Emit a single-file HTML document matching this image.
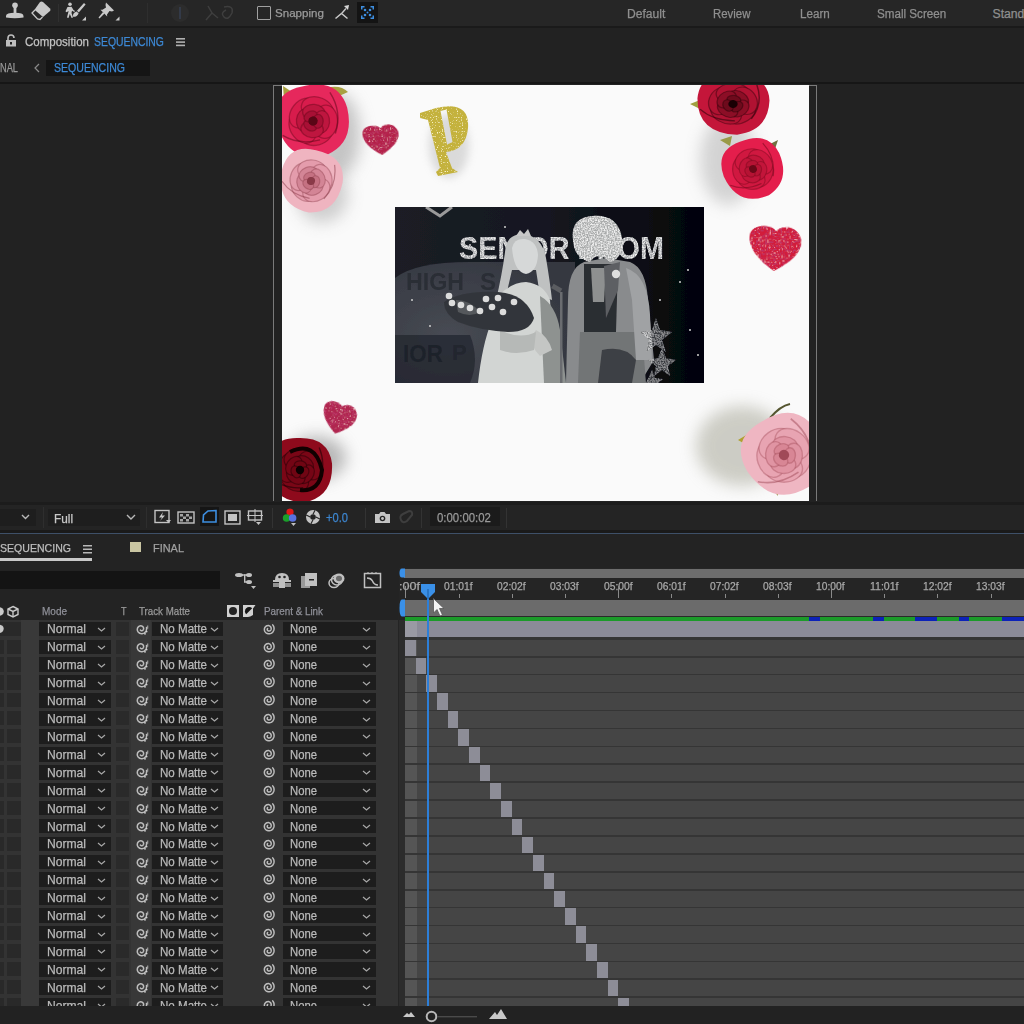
<!DOCTYPE html>
<html><head><meta charset="utf-8">
<style>
*{margin:0;padding:0;box-sizing:border-box}
html,body{width:1024px;height:1024px;overflow:hidden;background:#202020;font-family:"Liberation Sans",sans-serif;color:#a8a8a8;position:relative}
.a{position:absolute;display:block}
.t{position:absolute;white-space:nowrap;transform-origin:0 0;-webkit-text-stroke:0.25px currentColor}
</style></head><body>
<div class="a" style="left:0px;top:0px;width:1024px;height:26px;background:#262626;"></div>
<div class="a" style="left:0px;top:26px;width:1024px;height:2px;background:#1a1a1a;"></div>
<svg class="a" style="left:0px;top:0px;" width="130" height="26" viewBox="0 0 130 26"><g fill="#c9c9c9"><circle cx="15" cy="5.2" r="2.8"/><rect x="13.6" y="7" width="2.8" height="6"/><path d="M6 16 Q6 12.8 15 12.8 Q23.5 12.8 23.5 16 L23.5 17.6 Q15 19 6 17.6Z"/><path d="M40 2 Q41.5 0.8 43 2 L50 8.5 Q51 10 50 11 L43 17 L34.5 9.8Z"/><circle cx="70" cy="4.3" r="1.8"/><path d="M67.5 7 L71.5 6.8 L73.5 10 L75 11 L74.3 12 L72 10.8 L71.5 13 L73 17.5 L71.6 18 L69.8 14 L68.5 18 L67 17.6 L68.6 11 L66.5 12.2 L65.5 11.2Z"/><path d="M84 3 L85.6 4.6 L78.8 12.4 L77 10.8Z"/><path d="M76.5 11.5 Q73 12.5 72.8 16.8 Q77.5 17 78.6 13.2Z"/><path d="M82 20.5 L86 20.5 L86 16.5Z"/><path d="M106 2.5 L114 10.5 L112 11.5 L109.5 11 L107 14.5 L107.2 16.5 L100.5 9.8 L102.5 9.8 L106 7.5 L105.5 5Z"/><path d="M103 12 L104.5 13.5 L99.5 18.5 L98.5 17.5Z"/><path d="M115.5 20.5 L119.5 20.5 L119.5 16.5Z"/></g><path d="M35 10 L32 13 L37.5 19 L40 19.5 L42.5 17" fill="none" stroke="#c9c9c9" stroke-width="1.3"/><rect x="58" y="4" width="1" height="18" fill="#303030"/></svg>
<div class="a" style="left:147px;top:3px;width:1px;height:20px;background:#2e2e2e;"></div>
<svg class="a" style="left:168px;top:1px;" width="70" height="24" viewBox="0 0 70 24"><circle cx="12" cy="12" r="9" fill="#2c2c2c"/><path d="M11 6 L13 6 L13 18 L11 18Z" fill="#333a48"/><path d="M40 5 L44 12 L38 19 M44 12 L50 17" stroke="#3e3e3e" stroke-width="1.5" fill="none"/><path d="M56 6 Q66 4 64 12 Q60 20 56 16 Q52 12 58 9" stroke="#3e3e3e" stroke-width="1.5" fill="none"/></svg>
<div class="a" style="left:257px;top:6px;width:14px;height:14px;background:transparent;border:1.5px solid #a0a0a0;border-radius:1px"></div>
<div class="t" style="left:275px;top:8.16px;font-size:11.39px;line-height:11.39px;color:#9b9b9b;transform:scaleX(1.018);">Snapping</div>
<svg class="a" style="left:333px;top:3px;" width="18" height="18" viewBox="0 0 18 18"><path d="M2.5 15.5 L8.5 10.5 L14.5 15.5" stroke="#c9c9c9" stroke-width="1.5" fill="none"/><path d="M9 10 L13 5.5" stroke="#c9c9c9" stroke-width="1.4"/><path d="M11 3 L16 2 L15 7Z" fill="#d8d8d8"/></svg>
<div class="a" style="left:357px;top:2px;width:21px;height:21px;background:#141414;"></div>
<svg class="a" style="left:357px;top:2px;" width="21" height="21" viewBox="0 0 21 21"><g fill="#3d8ee0"><path d="M4 4h3.5v1.5H5.5V7.5H4z"/><path d="M17 4h-3.5v1.5h2V7.5H17z"/><path d="M4 17h3.5v-1.5H5.5V13.5H4z"/><path d="M17 17h-3.5v-1.5h2V13.5H17z"/><circle cx="8" cy="8" r="1.3"/><circle cx="13" cy="8" r="1.3"/><circle cx="8" cy="13" r="1.3"/><circle cx="13" cy="13" r="1.3"/><circle cx="10.5" cy="10.5" r="1"/></g></svg>
<div class="t" style="left:627px;top:7.57px;font-size:12.21px;line-height:12.21px;color:#8f8f8f;transform:scaleX(0.993);">Default</div>
<div class="t" style="left:712.6px;top:7.57px;font-size:12.21px;line-height:12.21px;color:#8f8f8f;transform:scaleX(0.934);">Review</div>
<div class="t" style="left:800px;top:7.57px;font-size:12.21px;line-height:12.21px;color:#8f8f8f;transform:scaleX(0.954);">Learn</div>
<div class="t" style="left:876.6px;top:7.57px;font-size:12.21px;line-height:12.21px;color:#8f8f8f;transform:scaleX(0.953);">Small Screen</div>
<div class="t" style="left:992.5px;top:7.57px;font-size:12.21px;line-height:12.21px;color:#8f8f8f;transform:scaleX(1.000);">Standard</div>
<div class="a" style="left:0px;top:28px;width:1024px;height:54px;background:#222222;"></div>
<svg class="a" style="left:5px;top:34px;" width="12" height="13" viewBox="0 0 12 13"><path d="M3 6 V4 Q3 1 6 1 Q9 1 9 4" stroke="#bdbdbd" stroke-width="1.6" fill="none"/><rect x="1" y="6" width="10" height="6.5" fill="#bdbdbd"/><rect x="5" y="8" width="2" height="2.5" fill="#222"/></svg>
<div class="t" style="left:25px;top:36.02px;font-size:12.62px;line-height:12.62px;color:#c3c3c3;transform:scaleX(0.912);">Composition</div>
<div class="t" style="left:94px;top:36.02px;font-size:12.62px;line-height:12.62px;color:#3d89d6;transform:scaleX(0.825);">SEQUENCING</div>
<svg class="a" style="left:176px;top:37px;" width="9" height="10" viewBox="0 0 9 10"><g fill="#b0b0b0"><rect y="1" width="9" height="1.6"/><rect y="4.3" width="9" height="1.6"/><rect y="7.6" width="9" height="1.6"/></g></svg>
<div class="t" style="left:0px;top:61.82px;font-size:12.62px;line-height:12.62px;color:#9a9a9a;transform:scaleX(0.733);">NAL</div>
<svg class="a" style="left:33px;top:63px;" width="8" height="10" viewBox="0 0 8 10"><path d="M6 1 L2 5 L6 9" stroke="#8a8a8a" stroke-width="1.2" fill="none"/></svg>
<div class="a" style="left:46px;top:60px;width:104px;height:16px;background:#151515;"></div>
<div class="t" style="left:54px;top:61.82px;font-size:12.62px;line-height:12.62px;color:#3d89d6;transform:scaleX(0.837);">SEQUENCING</div>
<div class="a" style="left:0px;top:82px;width:1024px;height:2px;background:#161616;"></div>
<div class="a" style="left:0px;top:84px;width:1024px;height:418px;background:#222222;"></div>
<div class="a" style="left:273px;top:85px;width:1px;height:416px;background:#7a7a7a;"></div>
<div class="a" style="left:273px;top:85px;width:9px;height:1px;background:#7a7a7a;"></div>
<div class="a" style="left:816px;top:85px;width:1px;height:416px;background:#7a7a7a;"></div>
<div class="a" style="left:809px;top:85px;width:8px;height:1px;background:#7a7a7a;"></div>
<svg class="a" style="left:282px;top:85px" width="527" height="416" viewBox="282 85 527 416"><defs><filter id="bl8" x="-50%" y="-50%" width="200%" height="200%"><feGaussianBlur stdDeviation="8"/></filter><filter id="bl4" x="-50%" y="-50%" width="200%" height="200%"><feGaussianBlur stdDeviation="4"/></filter><filter id="bl1"><feGaussianBlur stdDeviation="0.8"/></filter><filter id="gl"><feTurbulence type="fractalNoise" baseFrequency="0.55" numOctaves="1" seed="3" result="n"/><feColorMatrix in="n" type="matrix" values="0 0 0 0 0.95  0 0 0 0 0.45  0 0 0 0 0.55  0 0 0 6 -3.7" result="s"/><feColorMatrix in="n" type="matrix" values="0 0 0 0 0.5  0 0 0 0 0.04  0 0 0 0 0.14  0 0 0 -9 4.1" result="d"/><feComposite in="s" in2="SourceAlpha" operator="in" result="sp"/><feComposite in="d" in2="SourceAlpha" operator="in" result="dp"/><feMerge><feMergeNode in="SourceGraphic"/><feMergeNode in="dp"/><feMergeNode in="sp"/></feMerge></filter><filter id="glg"><feTurbulence type="fractalNoise" baseFrequency="0.8" numOctaves="1" seed="5" result="n"/><feColorMatrix in="n" type="matrix" values="0 0 0 0 0.98  0 0 0 0 0.92  0 0 0 0 0.55  0 0 0 6 -3.6" result="s"/><feComposite in="s" in2="SourceAlpha" operator="in" result="sp"/><feMerge><feMergeNode in="SourceGraphic"/><feMergeNode in="sp"/></feMerge></filter></defs><rect x="282" y="85" width="527" height="416" fill="#fafafa"/><ellipse cx="338" cy="135" rx="22" ry="42" fill="#9a9a9a" opacity="0.55" filter="url(#bl8)"/><ellipse cx="322" cy="195" rx="26" ry="28" fill="#9a9a9a" opacity="0.45" filter="url(#bl8)"/><ellipse cx="728" cy="160" rx="28" ry="45" fill="#9a9a9a" opacity="0.4" filter="url(#bl8)"/><ellipse cx="316" cy="458" rx="30" ry="22" fill="#8a8a8a" opacity="0.6" filter="url(#bl8)"/><ellipse cx="742" cy="446" rx="46" ry="40" fill="#a8a89a" opacity="0.55" filter="url(#bl8)"/><ellipse cx="449" cy="146" rx="20" ry="32" fill="#a0a0a0" opacity="0.35" filter="url(#bl4)"/><path d="M326 88 Q340 84 348 92 Q338 98 328 94Z" fill="#a8a040"/><path d="M283 86 L292 92 L284 100Z" fill="#a8a040"/><g transform="translate(313 121) scale(1 1.0) rotate(-10)"><path d="M-36 -3.6 Q-36 -36 -3.6 -36 Q32.4 -37.800000000000004 36 -7.2 Q37.800000000000004 28.8 7.2 36 Q-32.4 37.800000000000004 -36 -3.6Z" fill="#e6285c"/><ellipse cx="0.9" cy="12.2" rx="16.7" ry="12.3" transform="rotate(176 0.9 12.2)" fill="#d81c4c" stroke="#5a0616" stroke-width="1.30" stroke-opacity="0.38"/><ellipse cx="-11.4" cy="4.7" rx="16.7" ry="12.3" transform="rotate(248 -11.4 4.7)" fill="#d81c4c" stroke="#5a0616" stroke-width="1.30" stroke-opacity="0.38"/><ellipse cx="-7.9" cy="-9.4" rx="16.7" ry="12.3" transform="rotate(320 -7.9 -9.4)" fill="#d81c4c" stroke="#5a0616" stroke-width="1.30" stroke-opacity="0.38"/><ellipse cx="6.4" cy="-10.4" rx="16.7" ry="12.3" transform="rotate(392 6.4 -10.4)" fill="#d81c4c" stroke="#5a0616" stroke-width="1.30" stroke-opacity="0.38"/><ellipse cx="11.9" cy="2.9" rx="16.7" ry="12.3" transform="rotate(464 11.9 2.9)" fill="#d81c4c" stroke="#5a0616" stroke-width="1.30" stroke-opacity="0.38"/><ellipse cx="-8.0" cy="-2.3" rx="11.3" ry="8.3" transform="rotate(286 -8.0 -2.3)" fill="#be163f" stroke="#5a0616" stroke-width="1.30" stroke-opacity="0.38"/><ellipse cx="2.3" cy="-8.0" rx="11.3" ry="8.3" transform="rotate(376 2.3 -8.0)" fill="#be163f" stroke="#5a0616" stroke-width="1.30" stroke-opacity="0.38"/><ellipse cx="8.0" cy="2.3" rx="11.3" ry="8.3" transform="rotate(466 8.0 2.3)" fill="#be163f" stroke="#5a0616" stroke-width="1.30" stroke-opacity="0.38"/><ellipse cx="-2.3" cy="8.0" rx="11.3" ry="8.3" transform="rotate(556 -2.3 8.0)" fill="#be163f" stroke="#5a0616" stroke-width="1.30" stroke-opacity="0.38"/><ellipse cx="-3.5" cy="3.8" rx="7.0" ry="5.1" transform="rotate(223 -3.5 3.8)" fill="#a81035" stroke="#5a0616" stroke-width="1.30" stroke-opacity="0.38"/><ellipse cx="-1.5" cy="-4.9" rx="7.0" ry="5.1" transform="rotate(343 -1.5 -4.9)" fill="#a81035" stroke="#5a0616" stroke-width="1.30" stroke-opacity="0.38"/><ellipse cx="5.0" cy="1.2" rx="7.0" ry="5.1" transform="rotate(463 5.0 1.2)" fill="#a81035" stroke="#5a0616" stroke-width="1.30" stroke-opacity="0.38"/><circle cx="0" cy="0" r="4.68" fill="#5a0616"/><path d="M-32.4 9.0 Q-18.0 21.599999999999998 3.6 19.8 M21.599999999999998 -25.2 Q30.599999999999998 -3.6 19.8 16.2" stroke="#5a0616" stroke-width="1.44" fill="none" opacity="0.5"/></g><g transform="translate(311 181) scale(1 1.0) rotate(15)"><path d="M-31 -3.1 Q-31 -31 -3.1 -31 Q27.900000000000002 -32.550000000000004 31 -6.2 Q32.550000000000004 24.8 6.2 31 Q-27.900000000000002 32.550000000000004 -31 -3.1Z" fill="#efb4c0"/><ellipse cx="-4.7" cy="9.5" rx="14.4" ry="10.6" transform="rotate(207 -4.7 9.5)" fill="#e49cac" stroke="#8a3a48" stroke-width="1.18" stroke-opacity="0.38"/><ellipse cx="-10.5" cy="-1.6" rx="14.4" ry="10.6" transform="rotate(279 -10.5 -1.6)" fill="#e49cac" stroke="#8a3a48" stroke-width="1.18" stroke-opacity="0.38"/><ellipse cx="-1.7" cy="-10.4" rx="14.4" ry="10.6" transform="rotate(351 -1.7 -10.4)" fill="#e49cac" stroke="#8a3a48" stroke-width="1.18" stroke-opacity="0.38"/><ellipse cx="9.4" cy="-4.9" rx="14.4" ry="10.6" transform="rotate(423 9.4 -4.9)" fill="#e49cac" stroke="#8a3a48" stroke-width="1.18" stroke-opacity="0.38"/><ellipse cx="7.5" cy="7.4" rx="14.4" ry="10.6" transform="rotate(495 7.5 7.4)" fill="#e49cac" stroke="#8a3a48" stroke-width="1.18" stroke-opacity="0.38"/><ellipse cx="4.2" cy="5.8" rx="9.8" ry="7.2" transform="rotate(144 4.2 5.8)" fill="#d38596" stroke="#8a3a48" stroke-width="1.18" stroke-opacity="0.38"/><ellipse cx="-5.8" cy="4.2" rx="9.8" ry="7.2" transform="rotate(234 -5.8 4.2)" fill="#d38596" stroke="#8a3a48" stroke-width="1.18" stroke-opacity="0.38"/><ellipse cx="-4.2" cy="-5.8" rx="9.8" ry="7.2" transform="rotate(324 -4.2 -5.8)" fill="#d38596" stroke="#8a3a48" stroke-width="1.18" stroke-opacity="0.38"/><ellipse cx="5.8" cy="-4.2" rx="9.8" ry="7.2" transform="rotate(414 5.8 -4.2)" fill="#d38596" stroke="#8a3a48" stroke-width="1.18" stroke-opacity="0.38"/><ellipse cx="-2.6" cy="-3.6" rx="6.0" ry="4.4" transform="rotate(324 -2.6 -3.6)" fill="#c57182" stroke="#8a3a48" stroke-width="1.18" stroke-opacity="0.38"/><ellipse cx="4.4" cy="-0.4" rx="6.0" ry="4.4" transform="rotate(444 4.4 -0.4)" fill="#c57182" stroke="#8a3a48" stroke-width="1.18" stroke-opacity="0.38"/><ellipse cx="-1.8" cy="4.0" rx="6.0" ry="4.4" transform="rotate(564 -1.8 4.0)" fill="#c57182" stroke="#8a3a48" stroke-width="1.18" stroke-opacity="0.38"/><circle cx="0" cy="0" r="4.03" fill="#8a3a48"/><path d="M-27.900000000000002 7.75 Q-15.5 18.599999999999998 3.1 17.05 M18.599999999999998 -21.7 Q26.349999999999998 -3.1 17.05 13.950000000000001" stroke="#8a3a48" stroke-width="1.24" fill="none" opacity="0.5"/></g><path transform="rotate(-5 381.0 139.5)" d="M381.0 155 C368.4 147.25 363 139.5 363 132.68 C363 125.55 372.0 124 376.68 125.55 C379.2 125.86 381.0 127.72 381.0 128.34 C381.0 127.72 384.6 124.62 390.0 125.24 C396.12 125.86 399 131.75 399 134.85 C399 142.6 391.8 148.8 381.0 155Z" fill="#b42448" filter="url(#gl)"/><path d="M420 113 L436 108 Q470 100 468 128 Q466 150 446 152 L452 168 L458 172 L438 176 L436 172 L440 168 L428 120 L420 118Z M440.5 111 L446.5 109.5 L452.5 142 L447 144.5Z" fill="#c4b23e" filter="url(#glg)" fill-rule="evenodd"/><path d="M690 104 L700 100 L702 110Z" fill="#a0a040"/><path d="M720 140 L732 136 L730 146Z" fill="#9a9a48"/><path d="M768 145 L778 140 L774 152Z" fill="#707040"/><g transform="translate(733 104) scale(1 0.84) rotate(5)"><path d="M-36 -3.6 Q-36 -36 -3.6 -36 Q32.4 -37.800000000000004 36 -7.2 Q37.800000000000004 28.8 7.2 36 Q-32.4 37.800000000000004 -36 -3.6Z" fill="#c4163a"/><ellipse cx="8.2" cy="9.2" rx="16.7" ry="12.3" transform="rotate(138 8.2 9.2)" fill="#b01232" stroke="#1a0004" stroke-width="1.30" stroke-opacity="0.38"/><ellipse cx="-6.2" cy="10.6" rx="16.7" ry="12.3" transform="rotate(210 -6.2 10.6)" fill="#b01232" stroke="#1a0004" stroke-width="1.30" stroke-opacity="0.38"/><ellipse cx="-12.0" cy="-2.6" rx="16.7" ry="12.3" transform="rotate(282 -12.0 -2.6)" fill="#b01232" stroke="#1a0004" stroke-width="1.30" stroke-opacity="0.38"/><ellipse cx="-1.2" cy="-12.2" rx="16.7" ry="12.3" transform="rotate(354 -1.2 -12.2)" fill="#b01232" stroke="#1a0004" stroke-width="1.30" stroke-opacity="0.38"/><ellipse cx="11.2" cy="-4.9" rx="16.7" ry="12.3" transform="rotate(426 11.2 -4.9)" fill="#b01232" stroke="#1a0004" stroke-width="1.30" stroke-opacity="0.38"/><ellipse cx="4.8" cy="-6.8" rx="11.3" ry="8.3" transform="rotate(395 4.8 -6.8)" fill="#8c0e26" stroke="#1a0004" stroke-width="1.30" stroke-opacity="0.38"/><ellipse cx="6.8" cy="4.8" rx="11.3" ry="8.3" transform="rotate(485 6.8 4.8)" fill="#8c0e26" stroke="#1a0004" stroke-width="1.30" stroke-opacity="0.38"/><ellipse cx="-4.8" cy="6.8" rx="11.3" ry="8.3" transform="rotate(575 -4.8 6.8)" fill="#8c0e26" stroke="#1a0004" stroke-width="1.30" stroke-opacity="0.38"/><ellipse cx="-6.8" cy="-4.8" rx="11.3" ry="8.3" transform="rotate(665 -6.8 -4.8)" fill="#8c0e26" stroke="#1a0004" stroke-width="1.30" stroke-opacity="0.38"/><ellipse cx="0.4" cy="-5.1" rx="7.0" ry="5.1" transform="rotate(365 0.4 -5.1)" fill="#6e0a1c" stroke="#1a0004" stroke-width="1.30" stroke-opacity="0.38"/><ellipse cx="4.2" cy="2.9" rx="7.0" ry="5.1" transform="rotate(485 4.2 2.9)" fill="#6e0a1c" stroke="#1a0004" stroke-width="1.30" stroke-opacity="0.38"/><ellipse cx="-4.7" cy="2.2" rx="7.0" ry="5.1" transform="rotate(605 -4.7 2.2)" fill="#6e0a1c" stroke="#1a0004" stroke-width="1.30" stroke-opacity="0.38"/><circle cx="0" cy="0" r="4.68" fill="#1a0004"/><path d="M-32.4 9.0 Q-18.0 21.599999999999998 3.6 19.8 M21.599999999999998 -25.2 Q30.599999999999998 -3.6 19.8 16.2" stroke="#1a0004" stroke-width="1.44" fill="none" opacity="0.5"/></g><g transform="translate(753 169) scale(1 1.0) rotate(-20)"><path d="M-30 -3.0 Q-30 -30 -3.0 -30 Q27.0 -31.5 30 -6.0 Q31.5 24.0 6.0 30 Q-27.0 31.5 -30 -3.0Z" fill="#e41e4c"/><ellipse cx="6.8" cy="7.6" rx="14.0" ry="10.2" transform="rotate(138 6.8 7.6)" fill="#d01840" stroke="#6a0818" stroke-width="1.15" stroke-opacity="0.38"/><ellipse cx="-5.2" cy="8.8" rx="14.0" ry="10.2" transform="rotate(210 -5.2 8.8)" fill="#d01840" stroke="#6a0818" stroke-width="1.15" stroke-opacity="0.38"/><ellipse cx="-10.0" cy="-2.2" rx="14.0" ry="10.2" transform="rotate(282 -10.0 -2.2)" fill="#d01840" stroke="#6a0818" stroke-width="1.15" stroke-opacity="0.38"/><ellipse cx="-1.0" cy="-10.2" rx="14.0" ry="10.2" transform="rotate(354 -1.0 -10.2)" fill="#d01840" stroke="#6a0818" stroke-width="1.15" stroke-opacity="0.38"/><ellipse cx="9.4" cy="-4.1" rx="14.0" ry="10.2" transform="rotate(426 9.4 -4.1)" fill="#d01840" stroke="#6a0818" stroke-width="1.15" stroke-opacity="0.38"/><ellipse cx="4.0" cy="-5.7" rx="9.4" ry="6.9" transform="rotate(395 4.0 -5.7)" fill="#c2153a" stroke="#6a0818" stroke-width="1.15" stroke-opacity="0.38"/><ellipse cx="5.7" cy="4.0" rx="9.4" ry="6.9" transform="rotate(485 5.7 4.0)" fill="#c2153a" stroke="#6a0818" stroke-width="1.15" stroke-opacity="0.38"/><ellipse cx="-4.0" cy="5.7" rx="9.4" ry="6.9" transform="rotate(575 -4.0 5.7)" fill="#c2153a" stroke="#6a0818" stroke-width="1.15" stroke-opacity="0.38"/><ellipse cx="-5.7" cy="-4.0" rx="9.4" ry="6.9" transform="rotate(665 -5.7 -4.0)" fill="#c2153a" stroke="#6a0818" stroke-width="1.15" stroke-opacity="0.38"/><ellipse cx="0.4" cy="-4.3" rx="5.9" ry="4.3" transform="rotate(365 0.4 -4.3)" fill="#b61334" stroke="#6a0818" stroke-width="1.15" stroke-opacity="0.38"/><ellipse cx="3.5" cy="2.5" rx="5.9" ry="4.3" transform="rotate(485 3.5 2.5)" fill="#b61334" stroke="#6a0818" stroke-width="1.15" stroke-opacity="0.38"/><ellipse cx="-3.9" cy="1.8" rx="5.9" ry="4.3" transform="rotate(605 -3.9 1.8)" fill="#b61334" stroke="#6a0818" stroke-width="1.15" stroke-opacity="0.38"/><circle cx="0" cy="0" r="3.9000000000000004" fill="#6a0818"/><path d="M-27.0 7.5 Q-15.0 18.0 3.0 16.5 M18.0 -21.0 Q25.5 -3.0 16.5 13.5" stroke="#6a0818" stroke-width="1.2" fill="none" opacity="0.5"/></g><path transform="rotate(3 775.0 248.0)" d="M775.0 271 C756.8 259.5 749 248.0 749 237.88 C749 227.3 762.0 225 768.76 227.3 C772.4 227.76 775.0 230.52 775.0 231.44 C775.0 230.52 780.2 225.92 788.0 226.84 C796.84 227.76 801 236.5 801 241.1 C801 252.6 790.6 261.8 775.0 271Z" fill="#d21a3a" filter="url(#gl)"/><path transform="rotate(14 339.0 418.0)" d="M339.0 434 C327.1 426.0 322 418.0 322 410.96 C322 403.6 330.5 402 334.92 403.6 C337.3 403.92 339.0 405.84 339.0 406.48 C339.0 405.84 342.4 402.64 347.5 403.28 C353.28 403.92 356 410.0 356 413.2 C356 421.2 349.2 427.6 339.0 434Z" fill="#b02850" filter="url(#gl)"/><g transform="translate(300 470) scale(1 1.0) rotate(0)"><path d="M-32 -3.2 Q-32 -32 -3.2 -32 Q28.8 -33.6 32 -6.4 Q33.6 25.6 6.4 32 Q-28.8 33.6 -32 -3.2Z" fill="#8e0a1c"/><ellipse cx="7.2" cy="8.2" rx="14.9" ry="10.9" transform="rotate(138 7.2 8.2)" fill="#7a0616" stroke="#0a0000" stroke-width="1.20" stroke-opacity="0.38"/><ellipse cx="-5.5" cy="9.4" rx="14.9" ry="10.9" transform="rotate(210 -5.5 9.4)" fill="#7a0616" stroke="#0a0000" stroke-width="1.20" stroke-opacity="0.38"/><ellipse cx="-10.7" cy="-2.3" rx="14.9" ry="10.9" transform="rotate(282 -10.7 -2.3)" fill="#7a0616" stroke="#0a0000" stroke-width="1.20" stroke-opacity="0.38"/><ellipse cx="-1.1" cy="-10.9" rx="14.9" ry="10.9" transform="rotate(354 -1.1 -10.9)" fill="#7a0616" stroke="#0a0000" stroke-width="1.20" stroke-opacity="0.38"/><ellipse cx="10.0" cy="-4.4" rx="14.9" ry="10.9" transform="rotate(426 10.0 -4.4)" fill="#7a0616" stroke="#0a0000" stroke-width="1.20" stroke-opacity="0.38"/><ellipse cx="4.2" cy="-6.0" rx="10.1" ry="7.4" transform="rotate(395 4.2 -6.0)" fill="#740515" stroke="#0a0000" stroke-width="1.20" stroke-opacity="0.38"/><ellipse cx="6.0" cy="4.2" rx="10.1" ry="7.4" transform="rotate(485 6.0 4.2)" fill="#740515" stroke="#0a0000" stroke-width="1.20" stroke-opacity="0.38"/><ellipse cx="-4.2" cy="6.0" rx="10.1" ry="7.4" transform="rotate(575 -4.2 6.0)" fill="#740515" stroke="#0a0000" stroke-width="1.20" stroke-opacity="0.38"/><ellipse cx="-6.0" cy="-4.2" rx="10.1" ry="7.4" transform="rotate(665 -6.0 -4.2)" fill="#740515" stroke="#0a0000" stroke-width="1.20" stroke-opacity="0.38"/><ellipse cx="0.4" cy="-4.6" rx="6.2" ry="4.6" transform="rotate(365 0.4 -4.6)" fill="#700513" stroke="#0a0000" stroke-width="1.20" stroke-opacity="0.38"/><ellipse cx="3.8" cy="2.6" rx="6.2" ry="4.6" transform="rotate(485 3.8 2.6)" fill="#700513" stroke="#0a0000" stroke-width="1.20" stroke-opacity="0.38"/><ellipse cx="-4.1" cy="1.9" rx="6.2" ry="4.6" transform="rotate(605 -4.1 1.9)" fill="#700513" stroke="#0a0000" stroke-width="1.20" stroke-opacity="0.38"/><circle cx="0" cy="0" r="4.16" fill="#0a0000"/><path d="M-28.8 8.0 Q-16.0 19.2 3.2 17.6 M19.2 -22.4 Q27.2 -3.2 17.6 14.4" stroke="#0a0000" stroke-width="1.28" fill="none" opacity="0.5"/></g><path d="M290 452 Q315 440 322 470 Q320 492 300 490" stroke="#100000" stroke-width="4" fill="none"/><path d="M738 440 L748 434 L752 448Z" fill="#b0a030"/><path d="M768 484 L776 478 L778 496Z" fill="#8a8a30"/><path d="M770 418 Q780 406 790 404" stroke="#555530" stroke-width="2" fill="none"/><g transform="translate(784 455) scale(1 1.0) rotate(-30)"><path d="M-40 -4.0 Q-40 -40 -4.0 -40 Q36.0 -42.0 40 -8.0 Q42.0 32.0 8.0 40 Q-36.0 42.0 -40 -4.0Z" fill="#efb6c2"/><ellipse cx="9.1" cy="10.2" rx="18.6" ry="13.6" transform="rotate(138 9.1 10.2)" fill="#e8a4b2" stroke="#a04a58" stroke-width="1.40" stroke-opacity="0.38"/><ellipse cx="-6.9" cy="11.8" rx="18.6" ry="13.6" transform="rotate(210 -6.9 11.8)" fill="#e8a4b2" stroke="#a04a58" stroke-width="1.40" stroke-opacity="0.38"/><ellipse cx="-13.3" cy="-2.9" rx="18.6" ry="13.6" transform="rotate(282 -13.3 -2.9)" fill="#e8a4b2" stroke="#a04a58" stroke-width="1.40" stroke-opacity="0.38"/><ellipse cx="-1.3" cy="-13.6" rx="18.6" ry="13.6" transform="rotate(354 -1.3 -13.6)" fill="#e8a4b2" stroke="#a04a58" stroke-width="1.40" stroke-opacity="0.38"/><ellipse cx="12.5" cy="-5.5" rx="18.6" ry="13.6" transform="rotate(426 12.5 -5.5)" fill="#e8a4b2" stroke="#a04a58" stroke-width="1.40" stroke-opacity="0.38"/><ellipse cx="5.3" cy="-7.6" rx="12.6" ry="9.2" transform="rotate(395 5.3 -7.6)" fill="#e094a3" stroke="#a04a58" stroke-width="1.40" stroke-opacity="0.38"/><ellipse cx="7.6" cy="5.3" rx="12.6" ry="9.2" transform="rotate(485 7.6 5.3)" fill="#e094a3" stroke="#a04a58" stroke-width="1.40" stroke-opacity="0.38"/><ellipse cx="-5.3" cy="7.6" rx="12.6" ry="9.2" transform="rotate(575 -5.3 7.6)" fill="#e094a3" stroke="#a04a58" stroke-width="1.40" stroke-opacity="0.38"/><ellipse cx="-7.6" cy="-5.3" rx="12.6" ry="9.2" transform="rotate(665 -7.6 -5.3)" fill="#e094a3" stroke="#a04a58" stroke-width="1.40" stroke-opacity="0.38"/><ellipse cx="0.5" cy="-5.7" rx="7.8" ry="5.7" transform="rotate(365 0.5 -5.7)" fill="#d88695" stroke="#a04a58" stroke-width="1.40" stroke-opacity="0.38"/><ellipse cx="4.7" cy="3.3" rx="7.8" ry="5.7" transform="rotate(485 4.7 3.3)" fill="#d88695" stroke="#a04a58" stroke-width="1.40" stroke-opacity="0.38"/><ellipse cx="-5.2" cy="2.4" rx="7.8" ry="5.7" transform="rotate(605 -5.2 2.4)" fill="#d88695" stroke="#a04a58" stroke-width="1.40" stroke-opacity="0.38"/><circle cx="0" cy="0" r="5.2" fill="#a04a58"/><path d="M-36.0 10.0 Q-20.0 24.0 4.0 22.0 M24.0 -28.0 Q34.0 -4.0 22.0 18.0" stroke="#a04a58" stroke-width="1.6" fill="none" opacity="0.5"/></g><rect x="282" y="85" width="527" height="416" fill="none"/><defs><clipPath id="pc"><rect x="395" y="207" width="309" height="176"/></clipPath><filter id="sp"><feTurbulence type="fractalNoise" baseFrequency="0.7" numOctaves="2" seed="9" result="n"/><feColorMatrix in="n" type="matrix" values="0 0 0 0 0.85  0 0 0 0 0.85  0 0 0 0 0.85  0 0 0 -3 1.9" result="s"/><feComposite in="s" in2="SourceAlpha" operator="in" result="sp"/><feMerge><feMergeNode in="SourceGraphic"/><feMergeNode in="sp"/></feMerge></filter><filter id="bl05"><feGaussianBlur stdDeviation="0.6"/></filter><linearGradient id="pg" x1="0" y1="0" x2="1" y2="0"><stop offset="0" stop-color="#1b1e25"/><stop offset="0.5" stop-color="#141720"/><stop offset="1" stop-color="#03040a"/></linearGradient><radialGradient id="sg" cx="0.3" cy="0.6" r="0.7"><stop offset="0" stop-color="#474a53"/><stop offset="1" stop-color="#353841"/></radialGradient></defs><g clip-path="url(#pc)"><g filter="url(#bl05)"><rect x="395" y="207" width="309" height="176" fill="url(#pg)"/><path d="M395 278 Q415 262 470 262 L575 262 L575 383 L395 383Z" fill="url(#sg)"/><path d="M395 335 L470 335 Q480 360 470 383 L395 383Z" fill="#262932" opacity="0.85"/><path d="M426 207 L440 216 L452 207" stroke="#9a9a9a" stroke-width="3" fill="none"/><text x="406" y="290" font-family="Liberation Sans" font-weight="bold" font-size="24" fill="#2a2d35" textLength="58" lengthAdjust="spacingAndGlyphs">HIGH</text><text x="480" y="290" font-family="Liberation Sans" font-weight="bold" font-size="24" fill="#2a2d35">S</text><text x="403" y="362" font-family="Liberation Sans" font-weight="bold" font-size="24" fill="#1f222a" textLength="40" lengthAdjust="spacingAndGlyphs">IOR</text><text x="452" y="360" font-family="Liberation Sans" font-weight="bold" font-size="22" fill="#22252d">P</text><g filter="url(#sp)"><text x="459" y="259" font-family="Liberation Sans" font-weight="bold" font-size="32" fill="#a3a5a8" textLength="205" lengthAdjust="spacingAndGlyphs">SENIOR PROM</text></g><path d="M505 252 Q506 234 523 234 Q542 236 546 258 Q550 282 552 300 L540 296 L536 270 L512 270 L506 296 L496 300 Q502 275 505 252Z" fill="#bfc1c1"/><path d="M512 248 Q514 238 525 239 Q537 241 538 255 Q537 272 526 274 Q514 272 512 248Z" fill="#d6d8d8"/><path d="M516 236 L520 230 L524 234 L528 229 L531 236Z" fill="#c8c8c8"/><path d="M498 296 Q512 282 526 282 Q544 284 550 300 L552 330 L556 383 L478 383 Q482 345 492 320Z" fill="#d2d5d3"/><path d="M540 296 Q556 305 560 330 L566 383 L544 383Z" fill="#8e9290"/><path d="M536 330 Q548 336 552 350 L540 356 Q530 346 532 336Z" fill="#c4c6c4"/><path d="M500 330 Q520 340 536 332 L534 350 Q516 356 500 350Z" fill="#b6b9b7"/><path d="M444 302 Q462 290 498 292 Q526 294 534 318 Q530 332 508 332 Q478 330 458 322 Q444 314 444 302Z" fill="#33363b"/><path d="M456 300 Q470 300 480 312 Q470 318 458 312Z" fill="#55585c"/><circle cx="470" cy="308" r="3.3" fill="#dcdcdc"/><circle cx="480" cy="311" r="3.3" fill="#dcdcdc"/><circle cx="492" cy="307" r="3.3" fill="#dcdcdc"/><circle cx="503" cy="312" r="3.3" fill="#dcdcdc"/><circle cx="486" cy="299" r="3.3" fill="#dcdcdc"/><circle cx="498" cy="298" r="3.3" fill="#dcdcdc"/><circle cx="461" cy="305" r="3.3" fill="#dcdcdc"/><circle cx="514" cy="302" r="3.3" fill="#dcdcdc"/><circle cx="452" cy="303" r="3.3" fill="#dcdcdc"/><circle cx="449" cy="296" r="3.3" fill="#dcdcdc"/><rect x="560" y="292" width="2.5" height="91" fill="#6a6c70"/><rect x="552" y="286" width="10" height="5" fill="#5a5c60" transform="rotate(30 557 288)"/><path d="M566 383 L568 300 Q568 268 584 262 L606 258 L630 262 Q646 268 648 300 L654 360 L640 383Z" fill="#898b8d"/><path d="M584 264 L618 264 L616 332 L584 332Z" fill="#2c2e33"/><path d="M591 268 L606 268 L604 302 L593 302Z" fill="#8e9090"/><path d="M604 266 L620 262 L618 290 L606 318Z" fill="#5d5f63"/><path d="M580 332 L642 332 L646 383 L578 383Z" fill="#727476"/><path d="M602 350 Q625 345 636 360 L632 383 L598 383Z" fill="#3e4044"/><path d="M626 268 Q648 275 650 315 L652 360 L636 360 L632 300Z" fill="#a0a2a4"/><circle cx="616" cy="274" r="4.2" fill="#dedede"/><g filter="url(#sp)"><path d="M573 240 Q570 218 592 216 Q618 214 622 238 Q624 258 610 262 Q598 250 590 262 Q574 258 573 240Z" fill="#a9abab"/></g><g fill="#5a5c5e" opacity="0.6" filter="url(#sp)"><path d="M656 318 L660 330 L672 332 L662 340 L666 352 L656 345 L646 352 L649 340 L640 332 L652 330Z"/><path d="M662 348 L666 358 L676 360 L668 366 L670 376 L662 370 L654 376 L656 366 L648 360 L658 358Z"/><path d="M652 370 L655 378 L663 379 L657 384 L645 384 L648 379Z"/></g><circle cx="505" cy="227" r="1" fill="#cfcfcf"/><circle cx="470" cy="245" r="1" fill="#cfcfcf"/><circle cx="680" cy="282" r="1" fill="#cfcfcf"/><circle cx="690" cy="330" r="1" fill="#cfcfcf"/><circle cx="698" cy="355" r="1" fill="#cfcfcf"/><circle cx="412" cy="300" r="1" fill="#cfcfcf"/><circle cx="430" cy="326" r="1" fill="#cfcfcf"/><circle cx="600" cy="220" r="1" fill="#cfcfcf"/><circle cx="660" cy="300" r="1" fill="#cfcfcf"/><circle cx="688" cy="270" r="1" fill="#cfcfcf"/></g></g></svg>
<div class="a" style="left:0px;top:502px;width:1024px;height:3px;background:#1c1c1c;"></div>
<div class="a" style="left:0px;top:505px;width:1024px;height:25px;background:#242424;"></div>
<div class="a" style="left:0px;top:530px;width:1024px;height:3px;background:#1a1a1a;"></div>
<div class="a" style="left:0px;top:533px;width:1024px;height:1px;background:#3e5068;"></div>
<div class="a" style="left:0px;top:509px;width:36px;height:17px;background:#1e1e1e;"></div>
<svg class="a" style="left:21px;top:514px;" width="9" height="6" viewBox="0 0 9 6"><path d="M1 1 L4.5 4.5 L8 1" stroke="#b8b8b8" stroke-width="1.4" fill="none"/></svg>
<div class="a" style="left:43px;top:507px;width:1px;height:21px;background:#2e2e2e;"></div>
<div class="a" style="left:48px;top:509px;width:92px;height:17px;background:#1e1e1e;"></div>
<div class="t" style="left:54px;top:512.55px;font-size:12.35px;line-height:12.35px;color:#c8c8c8;transform:scaleX(0.955);">Full</div>
<svg class="a" style="left:126px;top:514px;" width="10" height="6" viewBox="0 0 10 6"><path d="M1 1 L5 5 L9 1" stroke="#b8b8b8" stroke-width="1.4" fill="none"/></svg>
<div class="a" style="left:146px;top:507px;width:1px;height:21px;background:#2e2e2e;"></div>
<svg class="a" style="left:154px;top:509px;" width="18" height="16" viewBox="0 0 18 16"><rect x="1" y="1.5" width="14" height="12" fill="none" stroke="#c4c4c4" stroke-width="1.4"/><path d="M9 3 L5 8.5 L8 8.5 L6 12 L11 6.5 L8 6.5Z" fill="#c4c4c4"/><path d="M12 11 L17 11 L14.5 14Z" fill="#c4c4c4"/></svg>
<svg class="a" style="left:177px;top:511px;" width="18" height="13" viewBox="0 0 18 13"><rect x="1" y="1" width="16" height="11" fill="none" stroke="#c4c4c4" stroke-width="1.4"/><g fill="#c4c4c4" opacity="0.8"><rect x="3" y="3" width="3" height="2.5"/><rect x="9" y="3" width="3" height="2.5"/><rect x="6" y="5.5" width="3" height="2.5"/><rect x="12" y="5.5" width="3" height="2.5"/><rect x="3" y="8" width="3" height="2.5"/><rect x="9" y="8" width="3" height="2.5"/></g></svg>
<div class="a" style="left:200px;top:507px;width:19px;height:19px;background:#151515;"></div>
<svg class="a" style="left:200px;top:507px;" width="19" height="19" viewBox="0 0 19 19"><path d="M3 15 L3.5 8 L8 4 L16 3.5 L16 15Z" fill="none" stroke="#3d8ee0" stroke-width="1.6"/></svg>
<svg class="a" style="left:224px;top:510px;" width="17" height="15" viewBox="0 0 17 15"><rect x="1" y="1" width="15" height="13" fill="none" stroke="#c4c4c4" stroke-width="1.4"/><rect x="4" y="4" width="9" height="7" fill="#c4c4c4"/></svg>
<svg class="a" style="left:247px;top:508px;" width="17" height="18" viewBox="0 0 17 18"><rect x="1.5" y="3" width="13" height="9" fill="none" stroke="#c4c4c4" stroke-width="1.4"/><path d="M8 1 V14 M0 7.5 H16" stroke="#c4c4c4" stroke-width="1"/><path d="M9 14 L14 14 L11.5 17Z" fill="#c4c4c4"/></svg>
<div class="a" style="left:272px;top:508px;width:1px;height:20px;background:#333;"></div>
<svg class="a" style="left:281px;top:507px;" width="18" height="20" viewBox="0 0 18 20"><circle cx="9" cy="5" r="3.6" fill="#e01818"/><circle cx="5.6" cy="11" r="3.8" fill="#1aa02a"/><circle cx="11.6" cy="11" r="3.8" fill="#5a72e0"/><path d="M10 16 L15 16 L12.5 19Z" fill="#c0c0c0"/></svg>
<svg class="a" style="left:305px;top:509px;" width="16" height="16" viewBox="0 0 16 16"><circle cx="8" cy="8" r="7" fill="#c4c4c4"/><circle cx="8" cy="8" r="2.8" fill="#242424"/><g stroke="#242424" stroke-width="1.1"><path d="M8 5.2 L10 1.2"/><path d="M10.8 8 L14.8 10"/><path d="M8 10.8 L6 14.8"/><path d="M5.2 8 L1.2 6"/></g></svg>
<div class="t" style="left:326px;top:512.02px;font-size:12.62px;line-height:12.62px;color:#3d86d0;transform:scaleX(0.883);">+0.0</div>
<div class="a" style="left:365px;top:508px;width:1px;height:20px;background:#333;"></div>
<svg class="a" style="left:374px;top:511px;" width="17" height="13" viewBox="0 0 17 13"><path d="M1 3 L5 3 L6.5 1 L10.5 1 L12 3 L16 3 L16 12 L1 12Z" fill="#c4c4c4"/><circle cx="8.5" cy="7.5" r="2.8" fill="#242424"/><circle cx="8.5" cy="7.5" r="1.4" fill="#c4c4c4"/></svg>
<svg class="a" style="left:397px;top:508px;" width="18" height="18" viewBox="0 0 18 18"><path d="M4 12 Q2 8 6 6 L12 3 Q16 3 15 7 L10 13 Q6 16 4 12Z" fill="none" stroke="#3e3e3e" stroke-width="2"/></svg>
<div class="a" style="left:421px;top:508px;width:1px;height:20px;background:#333;"></div>
<div class="a" style="left:430px;top:507px;width:70px;height:19px;background:#1b1b1b;"></div>
<div class="t" style="left:437px;top:511.47px;font-size:13.03px;line-height:13.03px;color:#9a9a9a;transform:scaleX(0.877);">0:00:00:02</div>
<div class="a" style="left:506px;top:508px;width:1px;height:20px;background:#333;"></div>
<div class="a" style="left:0px;top:534px;width:1024px;height:472px;background:#232323;"></div>
<div class="t" style="left:0px;top:543.16px;font-size:11.39px;line-height:11.39px;color:#bdbdbd;transform:scaleX(0.928);">SEQUENCING</div>
<svg class="a" style="left:83px;top:545px;" width="10" height="9" viewBox="0 0 10 9"><g fill="#b8b8b8"><rect y="0" width="9" height="1.5"/><rect y="3.5" width="9" height="1.5"/><rect y="7" width="9" height="1.5"/></g></svg>
<div class="a" style="left:0px;top:558px;width:92px;height:3px;background:#c8c8c8;"></div>
<div class="a" style="left:130px;top:542px;width:11px;height:10px;background:#c9c5a2;"></div>
<div class="t" style="left:153px;top:543.16px;font-size:11.39px;line-height:11.39px;color:#a0a0a0;transform:scaleX(0.961);">FINAL</div>
<div class="a" style="left:0px;top:571px;width:220px;height:18px;background:#141414;"></div>
<svg class="a" style="left:234px;top:571px;" width="24" height="19" viewBox="0 0 24 19"><g fill="#c0c0c0"><ellipse cx="5" cy="4" rx="4" ry="2"/><ellipse cx="15" cy="4" rx="3" ry="2"/><ellipse cx="15" cy="11" rx="3" ry="2"/><rect x="5" y="3.3" width="10" height="1.4"/><rect x="10" y="3.3" width="1.4" height="8"/><rect x="10" y="10.3" width="5" height="1.4"/><path d="M17 15 L22 15 L19.5 18Z"/></g></svg>
<svg class="a" style="left:272px;top:572px;" width="20" height="17" viewBox="0 0 20 17"><g fill="#c0c0c0"><path d="M3 8 Q3 1 10 1 Q17 1 17 8Z"/><rect x="1" y="8" width="18" height="2"/><rect x="1" y="11" width="18" height="4" opacity="0.7"/><rect x="7" y="9" width="6" height="7"/></g><circle cx="7.5" cy="5" r="1.3" fill="#232323"/><circle cx="12.5" cy="5" r="1.3" fill="#232323"/></svg>
<svg class="a" style="left:300px;top:572px;" width="18" height="17" viewBox="0 0 18 17"><g fill="#c0c0c0"><rect x="1" y="4" width="9" height="12" opacity="0.75"/><rect x="5" y="1" width="12" height="13"/></g><rect x="9" y="7" width="5" height="1.5" fill="#232323"/></svg>
<svg class="a" style="left:328px;top:572px;" width="18" height="17" viewBox="0 0 18 17"><g fill="none" stroke="#c0c0c0" stroke-width="1.5"><ellipse cx="6" cy="11" rx="5" ry="4.5"/><ellipse cx="9" cy="8" rx="5.5" ry="5"/></g><ellipse cx="11" cy="6.5" rx="5.5" ry="5" fill="#c0c0c0"/><ellipse cx="11" cy="6.5" rx="3" ry="2.7" fill="#6a6a6a"/></svg>
<svg class="a" style="left:363px;top:571px;" width="20" height="18" viewBox="0 0 20 18"><rect x="1.5" y="2.5" width="16" height="14" fill="none" stroke="#c0c0c0" stroke-width="1.5"/><path d="M4 7 Q8 7 9.5 10 Q11 14 15 14" stroke="#c0c0c0" stroke-width="1.5" fill="none"/><path d="M5 1 V3 M9 1 V3 M13 1 V3" stroke="#c0c0c0" stroke-width="1"/></svg>
<svg class="a" style="left:0px;top:605px;" width="22" height="13" viewBox="0 0 22 13"><circle cx="-0.5" cy="6.5" r="4.3" fill="#c8c8c8"/><g fill="none" stroke="#c8c8c8" stroke-width="1.4"><path d="M13 1.5 L18 4 L18 9.5 L13 12 L8 9.5 L8 4Z"/><path d="M8 4 L13 6.5 L18 4 M13 6.5 V12"/></g></svg>
<div class="t" style="left:42px;top:606.21px;font-size:10.97px;line-height:10.97px;color:#8f9098;transform:scaleX(0.911);">Mode</div>
<div class="t" style="left:121px;top:606.21px;font-size:10.97px;line-height:10.97px;color:#9a9a9a;transform:scaleX(0.821);">T</div>
<div class="t" style="left:139px;top:606.21px;font-size:10.97px;line-height:10.97px;color:#9a9a9a;transform:scaleX(0.887);">Track Matte</div>
<svg class="a" style="left:226px;top:604px;" width="30" height="14" viewBox="0 0 30 14"><rect x="1" y="1" width="12" height="12" fill="#d0d0d0"/><circle cx="7" cy="7" r="4" fill="#232323"/><path d="M17 1 L29.5 1 L27 4.5 L27 11 Q24 13 22 13 L17 13Z" fill="#d0d0d0"/><path d="M20.2 10.3 A4.2 4.2 0 0 1 26.2 4.3Z" fill="#151515"/></svg>
<div class="t" style="left:264px;top:606.21px;font-size:10.97px;line-height:10.97px;color:#8f9098;transform:scaleX(0.896);">Parent &amp; Link</div>
<div class="a" style="left:0px;top:620px;width:398px;height:386px;background:#333333;"></div>
<div class="a" style="left:398px;top:600px;width:1px;height:406px;background:#242424;"></div>
<div class="a" style="left:399px;top:620px;width:6px;height:386px;background:#2c2c2c;"></div>
<div class="a" style="left:0px;top:621.6px;width:4px;height:14.2px;background:#292929;"></div>
<div class="a" style="left:7px;top:621.6px;width:13.5px;height:14.2px;background:#292929;"></div>
<div class="a" style="left:20.5px;top:620.4px;width:18.5px;height:17.92px;background:#393939;"></div>
<div class="a" style="left:39.2px;top:621.6px;width:71.4px;height:14.6px;background:#1d1d1d;"></div>
<div class="t" style="left:47px;top:623.45px;font-size:12.35px;line-height:12.35px;color:#bababa;transform:scaleX(0.980);">Normal</div>
<svg class="a" style="left:97px;top:626.9px;" width="9" height="6" viewBox="0 0 9 6"><path d="M1 1 L4.5 4 L8 1" stroke="#a8a8a8" stroke-width="1.2" fill="none"/></svg>
<div class="a" style="left:116px;top:621.6px;width:13.3px;height:14.2px;background:#2a2a2a;"></div>
<div class="a" style="left:131px;top:620.4px;width:20px;height:17.92px;background:#383838;"></div>
<svg class="a" style="left:135px;top:621.6px;" width="14" height="14" viewBox="0 0 14 14"><path d="M5.38 8.01 L5.48 8.16 L5.61 8.29 L5.76 8.41 L5.93 8.52 L6.12 8.60 L6.32 8.66 L6.54 8.69 L6.77 8.69 L7.00 8.66 L7.23 8.59 L7.47 8.50 L7.69 8.37 L7.90 8.20 L8.09 8.01 L8.25 7.79 L8.39 7.54 L8.50 7.27 L8.58 6.98 L8.62 6.67 L8.61 6.35 L8.57 6.03 L8.48 5.71 L8.35 5.40 L8.18 5.10 L7.96 4.82 L7.71 4.57 L7.42 4.35 L7.09 4.16 L6.74 4.01 L6.36 3.90 L5.97 3.85 L5.56 3.84 L5.15 3.89 L4.75 3.99 L4.35 4.15 L3.97 4.36 L3.61 4.62 L3.28 4.93 L2.99 5.28 L2.75 5.67 L2.55 6.10 L2.41 6.56 L2.32 7.04 L2.30 7.53 L2.34 8.04 L2.44 8.53 L2.61 9.02 L2.84 9.49 L3.14 9.93 L3.49 10.34 L3.90 10.71 L4.36 11.02 L4.86 11.27 L5.40 11.47 L5.96 11.59 L6.54 11.65 L7.13 11.63 L7.72 11.53 L8.31 11.36 L8.87 11.11 L9.40 10.79 L9.90 10.40 L10.34 9.94 L10.73 9.43 L11.05 8.86 L11.31 8.25 L11.48 7.61 L11.58 6.94 L11.59 6.26 L11.51 5.58" fill="none" stroke="#bdbdbd" stroke-width="1.5" stroke-linecap="round"/><circle cx="11.6" cy="9.6" r="0.9" fill="#d0d0d0"/><circle cx="10" cy="11.8" r="0.9" fill="#d0d0d0"/><rect x="12.3" y="3.5" width="0.9" height="3.2" fill="#bdbdbd"/></svg>
<div class="a" style="left:152px;top:621.6px;width:71px;height:14.6px;background:#1d1d1d;"></div>
<div class="t" style="left:159.5px;top:623.45px;font-size:12.35px;line-height:12.35px;color:#bababa;transform:scaleX(0.938);">No Matte</div>
<svg class="a" style="left:210px;top:626.9px;" width="9" height="6" viewBox="0 0 9 6"><path d="M1 1 L4.5 4 L8 1" stroke="#a8a8a8" stroke-width="1.2" fill="none"/></svg>
<svg class="a" style="left:262px;top:621.6px;" width="14" height="14" viewBox="0 0 14 14"><path d="M5.61 6.55 L5.48 6.66 L5.38 6.81 L5.29 6.98 L5.23 7.18 L5.21 7.39 L5.22 7.61 L5.27 7.84 L5.36 8.06 L5.49 8.28 L5.66 8.48 L5.87 8.65 L6.11 8.80 L6.39 8.91 L6.69 8.97 L7.00 8.99 L7.32 8.95 L7.65 8.86 L7.96 8.72 L8.26 8.53 L8.53 8.28 L8.77 7.98 L8.96 7.64 L9.10 7.27 L9.18 6.87 L9.19 6.45 L9.14 6.02 L9.03 5.60 L8.84 5.19 L8.58 4.80 L8.27 4.45 L7.89 4.15 L7.46 3.91 L6.99 3.73 L6.48 3.62 L5.96 3.59 L5.43 3.65 L4.90 3.79 L4.39 4.01 L3.91 4.32 L3.48 4.70 L3.10 5.15 L2.79 5.67 L2.56 6.23 L2.42 6.84 L2.38 7.46 L2.43 8.10 L2.58 8.74 L2.83 9.35 L3.18 9.93 L3.62 10.45 L4.14 10.91 L4.73 11.29 L5.39 11.58 L6.09 11.76 L6.83 11.84 L7.57 11.80 L8.32 11.65 L9.04 11.38 L9.72 11.00 L10.34 10.51 L10.89 9.92 L11.34 9.25 L11.70 8.51 L11.93 7.71 L12.05 6.88 L12.03 6.02 L11.89 5.17 L11.61 4.34 L11.20 3.55 L10.67 2.83" fill="none" stroke="#bdbdbd" stroke-width="1.5" stroke-linecap="round"/></svg>
<div class="a" style="left:283px;top:621.6px;width:93.3px;height:14.6px;background:#1d1d1d;"></div>
<div class="t" style="left:290px;top:623.45px;font-size:12.35px;line-height:12.35px;color:#bababa;transform:scaleX(0.915);">None</div>
<svg class="a" style="left:362px;top:626.9px;" width="9" height="6" viewBox="0 0 9 6"><path d="M1 1 L4.5 4 L8 1" stroke="#a8a8a8" stroke-width="1.2" fill="none"/></svg>
<div class="a" style="left:0px;top:639.52px;width:4px;height:14.2px;background:#292929;"></div>
<div class="a" style="left:7px;top:639.52px;width:13.5px;height:14.2px;background:#292929;"></div>
<div class="a" style="left:20.5px;top:638.32px;width:18.5px;height:17.92px;background:#393939;"></div>
<div class="a" style="left:39.2px;top:639.52px;width:71.4px;height:14.6px;background:#1d1d1d;"></div>
<div class="t" style="left:47px;top:641.37px;font-size:12.35px;line-height:12.35px;color:#bababa;transform:scaleX(0.980);">Normal</div>
<svg class="a" style="left:97px;top:644.8199999999999px;" width="9" height="6" viewBox="0 0 9 6"><path d="M1 1 L4.5 4 L8 1" stroke="#a8a8a8" stroke-width="1.2" fill="none"/></svg>
<div class="a" style="left:116px;top:639.52px;width:13.3px;height:14.2px;background:#2a2a2a;"></div>
<div class="a" style="left:131px;top:638.32px;width:20px;height:17.92px;background:#383838;"></div>
<svg class="a" style="left:135px;top:639.52px;" width="14" height="14" viewBox="0 0 14 14"><path d="M5.38 8.01 L5.48 8.16 L5.61 8.29 L5.76 8.41 L5.93 8.52 L6.12 8.60 L6.32 8.66 L6.54 8.69 L6.77 8.69 L7.00 8.66 L7.23 8.59 L7.47 8.50 L7.69 8.37 L7.90 8.20 L8.09 8.01 L8.25 7.79 L8.39 7.54 L8.50 7.27 L8.58 6.98 L8.62 6.67 L8.61 6.35 L8.57 6.03 L8.48 5.71 L8.35 5.40 L8.18 5.10 L7.96 4.82 L7.71 4.57 L7.42 4.35 L7.09 4.16 L6.74 4.01 L6.36 3.90 L5.97 3.85 L5.56 3.84 L5.15 3.89 L4.75 3.99 L4.35 4.15 L3.97 4.36 L3.61 4.62 L3.28 4.93 L2.99 5.28 L2.75 5.67 L2.55 6.10 L2.41 6.56 L2.32 7.04 L2.30 7.53 L2.34 8.04 L2.44 8.53 L2.61 9.02 L2.84 9.49 L3.14 9.93 L3.49 10.34 L3.90 10.71 L4.36 11.02 L4.86 11.27 L5.40 11.47 L5.96 11.59 L6.54 11.65 L7.13 11.63 L7.72 11.53 L8.31 11.36 L8.87 11.11 L9.40 10.79 L9.90 10.40 L10.34 9.94 L10.73 9.43 L11.05 8.86 L11.31 8.25 L11.48 7.61 L11.58 6.94 L11.59 6.26 L11.51 5.58" fill="none" stroke="#bdbdbd" stroke-width="1.5" stroke-linecap="round"/><circle cx="11.6" cy="9.6" r="0.9" fill="#d0d0d0"/><circle cx="10" cy="11.8" r="0.9" fill="#d0d0d0"/><rect x="12.3" y="3.5" width="0.9" height="3.2" fill="#bdbdbd"/></svg>
<div class="a" style="left:152px;top:639.52px;width:71px;height:14.6px;background:#1d1d1d;"></div>
<div class="t" style="left:159.5px;top:641.37px;font-size:12.35px;line-height:12.35px;color:#bababa;transform:scaleX(0.938);">No Matte</div>
<svg class="a" style="left:210px;top:644.8199999999999px;" width="9" height="6" viewBox="0 0 9 6"><path d="M1 1 L4.5 4 L8 1" stroke="#a8a8a8" stroke-width="1.2" fill="none"/></svg>
<svg class="a" style="left:262px;top:639.52px;" width="14" height="14" viewBox="0 0 14 14"><path d="M5.61 6.55 L5.48 6.66 L5.38 6.81 L5.29 6.98 L5.23 7.18 L5.21 7.39 L5.22 7.61 L5.27 7.84 L5.36 8.06 L5.49 8.28 L5.66 8.48 L5.87 8.65 L6.11 8.80 L6.39 8.91 L6.69 8.97 L7.00 8.99 L7.32 8.95 L7.65 8.86 L7.96 8.72 L8.26 8.53 L8.53 8.28 L8.77 7.98 L8.96 7.64 L9.10 7.27 L9.18 6.87 L9.19 6.45 L9.14 6.02 L9.03 5.60 L8.84 5.19 L8.58 4.80 L8.27 4.45 L7.89 4.15 L7.46 3.91 L6.99 3.73 L6.48 3.62 L5.96 3.59 L5.43 3.65 L4.90 3.79 L4.39 4.01 L3.91 4.32 L3.48 4.70 L3.10 5.15 L2.79 5.67 L2.56 6.23 L2.42 6.84 L2.38 7.46 L2.43 8.10 L2.58 8.74 L2.83 9.35 L3.18 9.93 L3.62 10.45 L4.14 10.91 L4.73 11.29 L5.39 11.58 L6.09 11.76 L6.83 11.84 L7.57 11.80 L8.32 11.65 L9.04 11.38 L9.72 11.00 L10.34 10.51 L10.89 9.92 L11.34 9.25 L11.70 8.51 L11.93 7.71 L12.05 6.88 L12.03 6.02 L11.89 5.17 L11.61 4.34 L11.20 3.55 L10.67 2.83" fill="none" stroke="#bdbdbd" stroke-width="1.5" stroke-linecap="round"/></svg>
<div class="a" style="left:283px;top:639.52px;width:93.3px;height:14.6px;background:#1d1d1d;"></div>
<div class="t" style="left:290px;top:641.37px;font-size:12.35px;line-height:12.35px;color:#bababa;transform:scaleX(0.915);">None</div>
<svg class="a" style="left:362px;top:644.8199999999999px;" width="9" height="6" viewBox="0 0 9 6"><path d="M1 1 L4.5 4 L8 1" stroke="#a8a8a8" stroke-width="1.2" fill="none"/></svg>
<div class="a" style="left:0px;top:657.44px;width:4px;height:14.2px;background:#292929;"></div>
<div class="a" style="left:7px;top:657.44px;width:13.5px;height:14.2px;background:#292929;"></div>
<div class="a" style="left:20.5px;top:656.24px;width:18.5px;height:17.92px;background:#393939;"></div>
<div class="a" style="left:39.2px;top:657.44px;width:71.4px;height:14.6px;background:#1d1d1d;"></div>
<div class="t" style="left:47px;top:659.29px;font-size:12.35px;line-height:12.35px;color:#bababa;transform:scaleX(0.980);">Normal</div>
<svg class="a" style="left:97px;top:662.74px;" width="9" height="6" viewBox="0 0 9 6"><path d="M1 1 L4.5 4 L8 1" stroke="#a8a8a8" stroke-width="1.2" fill="none"/></svg>
<div class="a" style="left:116px;top:657.44px;width:13.3px;height:14.2px;background:#2a2a2a;"></div>
<div class="a" style="left:131px;top:656.24px;width:20px;height:17.92px;background:#383838;"></div>
<svg class="a" style="left:135px;top:657.44px;" width="14" height="14" viewBox="0 0 14 14"><path d="M5.38 8.01 L5.48 8.16 L5.61 8.29 L5.76 8.41 L5.93 8.52 L6.12 8.60 L6.32 8.66 L6.54 8.69 L6.77 8.69 L7.00 8.66 L7.23 8.59 L7.47 8.50 L7.69 8.37 L7.90 8.20 L8.09 8.01 L8.25 7.79 L8.39 7.54 L8.50 7.27 L8.58 6.98 L8.62 6.67 L8.61 6.35 L8.57 6.03 L8.48 5.71 L8.35 5.40 L8.18 5.10 L7.96 4.82 L7.71 4.57 L7.42 4.35 L7.09 4.16 L6.74 4.01 L6.36 3.90 L5.97 3.85 L5.56 3.84 L5.15 3.89 L4.75 3.99 L4.35 4.15 L3.97 4.36 L3.61 4.62 L3.28 4.93 L2.99 5.28 L2.75 5.67 L2.55 6.10 L2.41 6.56 L2.32 7.04 L2.30 7.53 L2.34 8.04 L2.44 8.53 L2.61 9.02 L2.84 9.49 L3.14 9.93 L3.49 10.34 L3.90 10.71 L4.36 11.02 L4.86 11.27 L5.40 11.47 L5.96 11.59 L6.54 11.65 L7.13 11.63 L7.72 11.53 L8.31 11.36 L8.87 11.11 L9.40 10.79 L9.90 10.40 L10.34 9.94 L10.73 9.43 L11.05 8.86 L11.31 8.25 L11.48 7.61 L11.58 6.94 L11.59 6.26 L11.51 5.58" fill="none" stroke="#bdbdbd" stroke-width="1.5" stroke-linecap="round"/><circle cx="11.6" cy="9.6" r="0.9" fill="#d0d0d0"/><circle cx="10" cy="11.8" r="0.9" fill="#d0d0d0"/><rect x="12.3" y="3.5" width="0.9" height="3.2" fill="#bdbdbd"/></svg>
<div class="a" style="left:152px;top:657.44px;width:71px;height:14.6px;background:#1d1d1d;"></div>
<div class="t" style="left:159.5px;top:659.29px;font-size:12.35px;line-height:12.35px;color:#bababa;transform:scaleX(0.938);">No Matte</div>
<svg class="a" style="left:210px;top:662.74px;" width="9" height="6" viewBox="0 0 9 6"><path d="M1 1 L4.5 4 L8 1" stroke="#a8a8a8" stroke-width="1.2" fill="none"/></svg>
<svg class="a" style="left:262px;top:657.44px;" width="14" height="14" viewBox="0 0 14 14"><path d="M5.61 6.55 L5.48 6.66 L5.38 6.81 L5.29 6.98 L5.23 7.18 L5.21 7.39 L5.22 7.61 L5.27 7.84 L5.36 8.06 L5.49 8.28 L5.66 8.48 L5.87 8.65 L6.11 8.80 L6.39 8.91 L6.69 8.97 L7.00 8.99 L7.32 8.95 L7.65 8.86 L7.96 8.72 L8.26 8.53 L8.53 8.28 L8.77 7.98 L8.96 7.64 L9.10 7.27 L9.18 6.87 L9.19 6.45 L9.14 6.02 L9.03 5.60 L8.84 5.19 L8.58 4.80 L8.27 4.45 L7.89 4.15 L7.46 3.91 L6.99 3.73 L6.48 3.62 L5.96 3.59 L5.43 3.65 L4.90 3.79 L4.39 4.01 L3.91 4.32 L3.48 4.70 L3.10 5.15 L2.79 5.67 L2.56 6.23 L2.42 6.84 L2.38 7.46 L2.43 8.10 L2.58 8.74 L2.83 9.35 L3.18 9.93 L3.62 10.45 L4.14 10.91 L4.73 11.29 L5.39 11.58 L6.09 11.76 L6.83 11.84 L7.57 11.80 L8.32 11.65 L9.04 11.38 L9.72 11.00 L10.34 10.51 L10.89 9.92 L11.34 9.25 L11.70 8.51 L11.93 7.71 L12.05 6.88 L12.03 6.02 L11.89 5.17 L11.61 4.34 L11.20 3.55 L10.67 2.83" fill="none" stroke="#bdbdbd" stroke-width="1.5" stroke-linecap="round"/></svg>
<div class="a" style="left:283px;top:657.44px;width:93.3px;height:14.6px;background:#1d1d1d;"></div>
<div class="t" style="left:290px;top:659.29px;font-size:12.35px;line-height:12.35px;color:#bababa;transform:scaleX(0.915);">None</div>
<svg class="a" style="left:362px;top:662.74px;" width="9" height="6" viewBox="0 0 9 6"><path d="M1 1 L4.5 4 L8 1" stroke="#a8a8a8" stroke-width="1.2" fill="none"/></svg>
<div class="a" style="left:0px;top:675.36px;width:4px;height:14.2px;background:#292929;"></div>
<div class="a" style="left:7px;top:675.36px;width:13.5px;height:14.2px;background:#292929;"></div>
<div class="a" style="left:20.5px;top:674.16px;width:18.5px;height:17.92px;background:#393939;"></div>
<div class="a" style="left:39.2px;top:675.36px;width:71.4px;height:14.6px;background:#1d1d1d;"></div>
<div class="t" style="left:47px;top:677.21px;font-size:12.35px;line-height:12.35px;color:#bababa;transform:scaleX(0.980);">Normal</div>
<svg class="a" style="left:97px;top:680.66px;" width="9" height="6" viewBox="0 0 9 6"><path d="M1 1 L4.5 4 L8 1" stroke="#a8a8a8" stroke-width="1.2" fill="none"/></svg>
<div class="a" style="left:116px;top:675.36px;width:13.3px;height:14.2px;background:#2a2a2a;"></div>
<div class="a" style="left:131px;top:674.16px;width:20px;height:17.92px;background:#383838;"></div>
<svg class="a" style="left:135px;top:675.36px;" width="14" height="14" viewBox="0 0 14 14"><path d="M5.38 8.01 L5.48 8.16 L5.61 8.29 L5.76 8.41 L5.93 8.52 L6.12 8.60 L6.32 8.66 L6.54 8.69 L6.77 8.69 L7.00 8.66 L7.23 8.59 L7.47 8.50 L7.69 8.37 L7.90 8.20 L8.09 8.01 L8.25 7.79 L8.39 7.54 L8.50 7.27 L8.58 6.98 L8.62 6.67 L8.61 6.35 L8.57 6.03 L8.48 5.71 L8.35 5.40 L8.18 5.10 L7.96 4.82 L7.71 4.57 L7.42 4.35 L7.09 4.16 L6.74 4.01 L6.36 3.90 L5.97 3.85 L5.56 3.84 L5.15 3.89 L4.75 3.99 L4.35 4.15 L3.97 4.36 L3.61 4.62 L3.28 4.93 L2.99 5.28 L2.75 5.67 L2.55 6.10 L2.41 6.56 L2.32 7.04 L2.30 7.53 L2.34 8.04 L2.44 8.53 L2.61 9.02 L2.84 9.49 L3.14 9.93 L3.49 10.34 L3.90 10.71 L4.36 11.02 L4.86 11.27 L5.40 11.47 L5.96 11.59 L6.54 11.65 L7.13 11.63 L7.72 11.53 L8.31 11.36 L8.87 11.11 L9.40 10.79 L9.90 10.40 L10.34 9.94 L10.73 9.43 L11.05 8.86 L11.31 8.25 L11.48 7.61 L11.58 6.94 L11.59 6.26 L11.51 5.58" fill="none" stroke="#bdbdbd" stroke-width="1.5" stroke-linecap="round"/><circle cx="11.6" cy="9.6" r="0.9" fill="#d0d0d0"/><circle cx="10" cy="11.8" r="0.9" fill="#d0d0d0"/><rect x="12.3" y="3.5" width="0.9" height="3.2" fill="#bdbdbd"/></svg>
<div class="a" style="left:152px;top:675.36px;width:71px;height:14.6px;background:#1d1d1d;"></div>
<div class="t" style="left:159.5px;top:677.21px;font-size:12.35px;line-height:12.35px;color:#bababa;transform:scaleX(0.938);">No Matte</div>
<svg class="a" style="left:210px;top:680.66px;" width="9" height="6" viewBox="0 0 9 6"><path d="M1 1 L4.5 4 L8 1" stroke="#a8a8a8" stroke-width="1.2" fill="none"/></svg>
<svg class="a" style="left:262px;top:675.36px;" width="14" height="14" viewBox="0 0 14 14"><path d="M5.61 6.55 L5.48 6.66 L5.38 6.81 L5.29 6.98 L5.23 7.18 L5.21 7.39 L5.22 7.61 L5.27 7.84 L5.36 8.06 L5.49 8.28 L5.66 8.48 L5.87 8.65 L6.11 8.80 L6.39 8.91 L6.69 8.97 L7.00 8.99 L7.32 8.95 L7.65 8.86 L7.96 8.72 L8.26 8.53 L8.53 8.28 L8.77 7.98 L8.96 7.64 L9.10 7.27 L9.18 6.87 L9.19 6.45 L9.14 6.02 L9.03 5.60 L8.84 5.19 L8.58 4.80 L8.27 4.45 L7.89 4.15 L7.46 3.91 L6.99 3.73 L6.48 3.62 L5.96 3.59 L5.43 3.65 L4.90 3.79 L4.39 4.01 L3.91 4.32 L3.48 4.70 L3.10 5.15 L2.79 5.67 L2.56 6.23 L2.42 6.84 L2.38 7.46 L2.43 8.10 L2.58 8.74 L2.83 9.35 L3.18 9.93 L3.62 10.45 L4.14 10.91 L4.73 11.29 L5.39 11.58 L6.09 11.76 L6.83 11.84 L7.57 11.80 L8.32 11.65 L9.04 11.38 L9.72 11.00 L10.34 10.51 L10.89 9.92 L11.34 9.25 L11.70 8.51 L11.93 7.71 L12.05 6.88 L12.03 6.02 L11.89 5.17 L11.61 4.34 L11.20 3.55 L10.67 2.83" fill="none" stroke="#bdbdbd" stroke-width="1.5" stroke-linecap="round"/></svg>
<div class="a" style="left:283px;top:675.36px;width:93.3px;height:14.6px;background:#1d1d1d;"></div>
<div class="t" style="left:290px;top:677.21px;font-size:12.35px;line-height:12.35px;color:#bababa;transform:scaleX(0.915);">None</div>
<svg class="a" style="left:362px;top:680.66px;" width="9" height="6" viewBox="0 0 9 6"><path d="M1 1 L4.5 4 L8 1" stroke="#a8a8a8" stroke-width="1.2" fill="none"/></svg>
<div class="a" style="left:0px;top:693.28px;width:4px;height:14.2px;background:#292929;"></div>
<div class="a" style="left:7px;top:693.28px;width:13.5px;height:14.2px;background:#292929;"></div>
<div class="a" style="left:20.5px;top:692.08px;width:18.5px;height:17.92px;background:#393939;"></div>
<div class="a" style="left:39.2px;top:693.28px;width:71.4px;height:14.6px;background:#1d1d1d;"></div>
<div class="t" style="left:47px;top:695.13px;font-size:12.35px;line-height:12.35px;color:#bababa;transform:scaleX(0.980);">Normal</div>
<svg class="a" style="left:97px;top:698.5799999999999px;" width="9" height="6" viewBox="0 0 9 6"><path d="M1 1 L4.5 4 L8 1" stroke="#a8a8a8" stroke-width="1.2" fill="none"/></svg>
<div class="a" style="left:116px;top:693.28px;width:13.3px;height:14.2px;background:#2a2a2a;"></div>
<div class="a" style="left:131px;top:692.08px;width:20px;height:17.92px;background:#383838;"></div>
<svg class="a" style="left:135px;top:693.28px;" width="14" height="14" viewBox="0 0 14 14"><path d="M5.38 8.01 L5.48 8.16 L5.61 8.29 L5.76 8.41 L5.93 8.52 L6.12 8.60 L6.32 8.66 L6.54 8.69 L6.77 8.69 L7.00 8.66 L7.23 8.59 L7.47 8.50 L7.69 8.37 L7.90 8.20 L8.09 8.01 L8.25 7.79 L8.39 7.54 L8.50 7.27 L8.58 6.98 L8.62 6.67 L8.61 6.35 L8.57 6.03 L8.48 5.71 L8.35 5.40 L8.18 5.10 L7.96 4.82 L7.71 4.57 L7.42 4.35 L7.09 4.16 L6.74 4.01 L6.36 3.90 L5.97 3.85 L5.56 3.84 L5.15 3.89 L4.75 3.99 L4.35 4.15 L3.97 4.36 L3.61 4.62 L3.28 4.93 L2.99 5.28 L2.75 5.67 L2.55 6.10 L2.41 6.56 L2.32 7.04 L2.30 7.53 L2.34 8.04 L2.44 8.53 L2.61 9.02 L2.84 9.49 L3.14 9.93 L3.49 10.34 L3.90 10.71 L4.36 11.02 L4.86 11.27 L5.40 11.47 L5.96 11.59 L6.54 11.65 L7.13 11.63 L7.72 11.53 L8.31 11.36 L8.87 11.11 L9.40 10.79 L9.90 10.40 L10.34 9.94 L10.73 9.43 L11.05 8.86 L11.31 8.25 L11.48 7.61 L11.58 6.94 L11.59 6.26 L11.51 5.58" fill="none" stroke="#bdbdbd" stroke-width="1.5" stroke-linecap="round"/><circle cx="11.6" cy="9.6" r="0.9" fill="#d0d0d0"/><circle cx="10" cy="11.8" r="0.9" fill="#d0d0d0"/><rect x="12.3" y="3.5" width="0.9" height="3.2" fill="#bdbdbd"/></svg>
<div class="a" style="left:152px;top:693.28px;width:71px;height:14.6px;background:#1d1d1d;"></div>
<div class="t" style="left:159.5px;top:695.13px;font-size:12.35px;line-height:12.35px;color:#bababa;transform:scaleX(0.938);">No Matte</div>
<svg class="a" style="left:210px;top:698.5799999999999px;" width="9" height="6" viewBox="0 0 9 6"><path d="M1 1 L4.5 4 L8 1" stroke="#a8a8a8" stroke-width="1.2" fill="none"/></svg>
<svg class="a" style="left:262px;top:693.28px;" width="14" height="14" viewBox="0 0 14 14"><path d="M5.61 6.55 L5.48 6.66 L5.38 6.81 L5.29 6.98 L5.23 7.18 L5.21 7.39 L5.22 7.61 L5.27 7.84 L5.36 8.06 L5.49 8.28 L5.66 8.48 L5.87 8.65 L6.11 8.80 L6.39 8.91 L6.69 8.97 L7.00 8.99 L7.32 8.95 L7.65 8.86 L7.96 8.72 L8.26 8.53 L8.53 8.28 L8.77 7.98 L8.96 7.64 L9.10 7.27 L9.18 6.87 L9.19 6.45 L9.14 6.02 L9.03 5.60 L8.84 5.19 L8.58 4.80 L8.27 4.45 L7.89 4.15 L7.46 3.91 L6.99 3.73 L6.48 3.62 L5.96 3.59 L5.43 3.65 L4.90 3.79 L4.39 4.01 L3.91 4.32 L3.48 4.70 L3.10 5.15 L2.79 5.67 L2.56 6.23 L2.42 6.84 L2.38 7.46 L2.43 8.10 L2.58 8.74 L2.83 9.35 L3.18 9.93 L3.62 10.45 L4.14 10.91 L4.73 11.29 L5.39 11.58 L6.09 11.76 L6.83 11.84 L7.57 11.80 L8.32 11.65 L9.04 11.38 L9.72 11.00 L10.34 10.51 L10.89 9.92 L11.34 9.25 L11.70 8.51 L11.93 7.71 L12.05 6.88 L12.03 6.02 L11.89 5.17 L11.61 4.34 L11.20 3.55 L10.67 2.83" fill="none" stroke="#bdbdbd" stroke-width="1.5" stroke-linecap="round"/></svg>
<div class="a" style="left:283px;top:693.28px;width:93.3px;height:14.6px;background:#1d1d1d;"></div>
<div class="t" style="left:290px;top:695.13px;font-size:12.35px;line-height:12.35px;color:#bababa;transform:scaleX(0.915);">None</div>
<svg class="a" style="left:362px;top:698.5799999999999px;" width="9" height="6" viewBox="0 0 9 6"><path d="M1 1 L4.5 4 L8 1" stroke="#a8a8a8" stroke-width="1.2" fill="none"/></svg>
<div class="a" style="left:0px;top:711.2px;width:4px;height:14.2px;background:#292929;"></div>
<div class="a" style="left:7px;top:711.2px;width:13.5px;height:14.2px;background:#292929;"></div>
<div class="a" style="left:20.5px;top:710.0px;width:18.5px;height:17.92px;background:#393939;"></div>
<div class="a" style="left:39.2px;top:711.2px;width:71.4px;height:14.6px;background:#1d1d1d;"></div>
<div class="t" style="left:47px;top:713.05px;font-size:12.35px;line-height:12.35px;color:#bababa;transform:scaleX(0.980);">Normal</div>
<svg class="a" style="left:97px;top:716.5px;" width="9" height="6" viewBox="0 0 9 6"><path d="M1 1 L4.5 4 L8 1" stroke="#a8a8a8" stroke-width="1.2" fill="none"/></svg>
<div class="a" style="left:116px;top:711.2px;width:13.3px;height:14.2px;background:#2a2a2a;"></div>
<div class="a" style="left:131px;top:710.0px;width:20px;height:17.92px;background:#383838;"></div>
<svg class="a" style="left:135px;top:711.2px;" width="14" height="14" viewBox="0 0 14 14"><path d="M5.38 8.01 L5.48 8.16 L5.61 8.29 L5.76 8.41 L5.93 8.52 L6.12 8.60 L6.32 8.66 L6.54 8.69 L6.77 8.69 L7.00 8.66 L7.23 8.59 L7.47 8.50 L7.69 8.37 L7.90 8.20 L8.09 8.01 L8.25 7.79 L8.39 7.54 L8.50 7.27 L8.58 6.98 L8.62 6.67 L8.61 6.35 L8.57 6.03 L8.48 5.71 L8.35 5.40 L8.18 5.10 L7.96 4.82 L7.71 4.57 L7.42 4.35 L7.09 4.16 L6.74 4.01 L6.36 3.90 L5.97 3.85 L5.56 3.84 L5.15 3.89 L4.75 3.99 L4.35 4.15 L3.97 4.36 L3.61 4.62 L3.28 4.93 L2.99 5.28 L2.75 5.67 L2.55 6.10 L2.41 6.56 L2.32 7.04 L2.30 7.53 L2.34 8.04 L2.44 8.53 L2.61 9.02 L2.84 9.49 L3.14 9.93 L3.49 10.34 L3.90 10.71 L4.36 11.02 L4.86 11.27 L5.40 11.47 L5.96 11.59 L6.54 11.65 L7.13 11.63 L7.72 11.53 L8.31 11.36 L8.87 11.11 L9.40 10.79 L9.90 10.40 L10.34 9.94 L10.73 9.43 L11.05 8.86 L11.31 8.25 L11.48 7.61 L11.58 6.94 L11.59 6.26 L11.51 5.58" fill="none" stroke="#bdbdbd" stroke-width="1.5" stroke-linecap="round"/><circle cx="11.6" cy="9.6" r="0.9" fill="#d0d0d0"/><circle cx="10" cy="11.8" r="0.9" fill="#d0d0d0"/><rect x="12.3" y="3.5" width="0.9" height="3.2" fill="#bdbdbd"/></svg>
<div class="a" style="left:152px;top:711.2px;width:71px;height:14.6px;background:#1d1d1d;"></div>
<div class="t" style="left:159.5px;top:713.05px;font-size:12.35px;line-height:12.35px;color:#bababa;transform:scaleX(0.938);">No Matte</div>
<svg class="a" style="left:210px;top:716.5px;" width="9" height="6" viewBox="0 0 9 6"><path d="M1 1 L4.5 4 L8 1" stroke="#a8a8a8" stroke-width="1.2" fill="none"/></svg>
<svg class="a" style="left:262px;top:711.2px;" width="14" height="14" viewBox="0 0 14 14"><path d="M5.61 6.55 L5.48 6.66 L5.38 6.81 L5.29 6.98 L5.23 7.18 L5.21 7.39 L5.22 7.61 L5.27 7.84 L5.36 8.06 L5.49 8.28 L5.66 8.48 L5.87 8.65 L6.11 8.80 L6.39 8.91 L6.69 8.97 L7.00 8.99 L7.32 8.95 L7.65 8.86 L7.96 8.72 L8.26 8.53 L8.53 8.28 L8.77 7.98 L8.96 7.64 L9.10 7.27 L9.18 6.87 L9.19 6.45 L9.14 6.02 L9.03 5.60 L8.84 5.19 L8.58 4.80 L8.27 4.45 L7.89 4.15 L7.46 3.91 L6.99 3.73 L6.48 3.62 L5.96 3.59 L5.43 3.65 L4.90 3.79 L4.39 4.01 L3.91 4.32 L3.48 4.70 L3.10 5.15 L2.79 5.67 L2.56 6.23 L2.42 6.84 L2.38 7.46 L2.43 8.10 L2.58 8.74 L2.83 9.35 L3.18 9.93 L3.62 10.45 L4.14 10.91 L4.73 11.29 L5.39 11.58 L6.09 11.76 L6.83 11.84 L7.57 11.80 L8.32 11.65 L9.04 11.38 L9.72 11.00 L10.34 10.51 L10.89 9.92 L11.34 9.25 L11.70 8.51 L11.93 7.71 L12.05 6.88 L12.03 6.02 L11.89 5.17 L11.61 4.34 L11.20 3.55 L10.67 2.83" fill="none" stroke="#bdbdbd" stroke-width="1.5" stroke-linecap="round"/></svg>
<div class="a" style="left:283px;top:711.2px;width:93.3px;height:14.6px;background:#1d1d1d;"></div>
<div class="t" style="left:290px;top:713.05px;font-size:12.35px;line-height:12.35px;color:#bababa;transform:scaleX(0.915);">None</div>
<svg class="a" style="left:362px;top:716.5px;" width="9" height="6" viewBox="0 0 9 6"><path d="M1 1 L4.5 4 L8 1" stroke="#a8a8a8" stroke-width="1.2" fill="none"/></svg>
<div class="a" style="left:0px;top:729.12px;width:4px;height:14.2px;background:#292929;"></div>
<div class="a" style="left:7px;top:729.12px;width:13.5px;height:14.2px;background:#292929;"></div>
<div class="a" style="left:20.5px;top:727.92px;width:18.5px;height:17.92px;background:#393939;"></div>
<div class="a" style="left:39.2px;top:729.12px;width:71.4px;height:14.6px;background:#1d1d1d;"></div>
<div class="t" style="left:47px;top:730.97px;font-size:12.35px;line-height:12.35px;color:#bababa;transform:scaleX(0.980);">Normal</div>
<svg class="a" style="left:97px;top:734.42px;" width="9" height="6" viewBox="0 0 9 6"><path d="M1 1 L4.5 4 L8 1" stroke="#a8a8a8" stroke-width="1.2" fill="none"/></svg>
<div class="a" style="left:116px;top:729.12px;width:13.3px;height:14.2px;background:#2a2a2a;"></div>
<div class="a" style="left:131px;top:727.92px;width:20px;height:17.92px;background:#383838;"></div>
<svg class="a" style="left:135px;top:729.12px;" width="14" height="14" viewBox="0 0 14 14"><path d="M5.38 8.01 L5.48 8.16 L5.61 8.29 L5.76 8.41 L5.93 8.52 L6.12 8.60 L6.32 8.66 L6.54 8.69 L6.77 8.69 L7.00 8.66 L7.23 8.59 L7.47 8.50 L7.69 8.37 L7.90 8.20 L8.09 8.01 L8.25 7.79 L8.39 7.54 L8.50 7.27 L8.58 6.98 L8.62 6.67 L8.61 6.35 L8.57 6.03 L8.48 5.71 L8.35 5.40 L8.18 5.10 L7.96 4.82 L7.71 4.57 L7.42 4.35 L7.09 4.16 L6.74 4.01 L6.36 3.90 L5.97 3.85 L5.56 3.84 L5.15 3.89 L4.75 3.99 L4.35 4.15 L3.97 4.36 L3.61 4.62 L3.28 4.93 L2.99 5.28 L2.75 5.67 L2.55 6.10 L2.41 6.56 L2.32 7.04 L2.30 7.53 L2.34 8.04 L2.44 8.53 L2.61 9.02 L2.84 9.49 L3.14 9.93 L3.49 10.34 L3.90 10.71 L4.36 11.02 L4.86 11.27 L5.40 11.47 L5.96 11.59 L6.54 11.65 L7.13 11.63 L7.72 11.53 L8.31 11.36 L8.87 11.11 L9.40 10.79 L9.90 10.40 L10.34 9.94 L10.73 9.43 L11.05 8.86 L11.31 8.25 L11.48 7.61 L11.58 6.94 L11.59 6.26 L11.51 5.58" fill="none" stroke="#bdbdbd" stroke-width="1.5" stroke-linecap="round"/><circle cx="11.6" cy="9.6" r="0.9" fill="#d0d0d0"/><circle cx="10" cy="11.8" r="0.9" fill="#d0d0d0"/><rect x="12.3" y="3.5" width="0.9" height="3.2" fill="#bdbdbd"/></svg>
<div class="a" style="left:152px;top:729.12px;width:71px;height:14.6px;background:#1d1d1d;"></div>
<div class="t" style="left:159.5px;top:730.97px;font-size:12.35px;line-height:12.35px;color:#bababa;transform:scaleX(0.938);">No Matte</div>
<svg class="a" style="left:210px;top:734.42px;" width="9" height="6" viewBox="0 0 9 6"><path d="M1 1 L4.5 4 L8 1" stroke="#a8a8a8" stroke-width="1.2" fill="none"/></svg>
<svg class="a" style="left:262px;top:729.12px;" width="14" height="14" viewBox="0 0 14 14"><path d="M5.61 6.55 L5.48 6.66 L5.38 6.81 L5.29 6.98 L5.23 7.18 L5.21 7.39 L5.22 7.61 L5.27 7.84 L5.36 8.06 L5.49 8.28 L5.66 8.48 L5.87 8.65 L6.11 8.80 L6.39 8.91 L6.69 8.97 L7.00 8.99 L7.32 8.95 L7.65 8.86 L7.96 8.72 L8.26 8.53 L8.53 8.28 L8.77 7.98 L8.96 7.64 L9.10 7.27 L9.18 6.87 L9.19 6.45 L9.14 6.02 L9.03 5.60 L8.84 5.19 L8.58 4.80 L8.27 4.45 L7.89 4.15 L7.46 3.91 L6.99 3.73 L6.48 3.62 L5.96 3.59 L5.43 3.65 L4.90 3.79 L4.39 4.01 L3.91 4.32 L3.48 4.70 L3.10 5.15 L2.79 5.67 L2.56 6.23 L2.42 6.84 L2.38 7.46 L2.43 8.10 L2.58 8.74 L2.83 9.35 L3.18 9.93 L3.62 10.45 L4.14 10.91 L4.73 11.29 L5.39 11.58 L6.09 11.76 L6.83 11.84 L7.57 11.80 L8.32 11.65 L9.04 11.38 L9.72 11.00 L10.34 10.51 L10.89 9.92 L11.34 9.25 L11.70 8.51 L11.93 7.71 L12.05 6.88 L12.03 6.02 L11.89 5.17 L11.61 4.34 L11.20 3.55 L10.67 2.83" fill="none" stroke="#bdbdbd" stroke-width="1.5" stroke-linecap="round"/></svg>
<div class="a" style="left:283px;top:729.12px;width:93.3px;height:14.6px;background:#1d1d1d;"></div>
<div class="t" style="left:290px;top:730.97px;font-size:12.35px;line-height:12.35px;color:#bababa;transform:scaleX(0.915);">None</div>
<svg class="a" style="left:362px;top:734.42px;" width="9" height="6" viewBox="0 0 9 6"><path d="M1 1 L4.5 4 L8 1" stroke="#a8a8a8" stroke-width="1.2" fill="none"/></svg>
<div class="a" style="left:0px;top:747.04px;width:4px;height:14.2px;background:#292929;"></div>
<div class="a" style="left:7px;top:747.04px;width:13.5px;height:14.2px;background:#292929;"></div>
<div class="a" style="left:20.5px;top:745.84px;width:18.5px;height:17.92px;background:#393939;"></div>
<div class="a" style="left:39.2px;top:747.04px;width:71.4px;height:14.6px;background:#1d1d1d;"></div>
<div class="t" style="left:47px;top:748.89px;font-size:12.35px;line-height:12.35px;color:#bababa;transform:scaleX(0.980);">Normal</div>
<svg class="a" style="left:97px;top:752.34px;" width="9" height="6" viewBox="0 0 9 6"><path d="M1 1 L4.5 4 L8 1" stroke="#a8a8a8" stroke-width="1.2" fill="none"/></svg>
<div class="a" style="left:116px;top:747.04px;width:13.3px;height:14.2px;background:#2a2a2a;"></div>
<div class="a" style="left:131px;top:745.84px;width:20px;height:17.92px;background:#383838;"></div>
<svg class="a" style="left:135px;top:747.0400000000001px;" width="14" height="14" viewBox="0 0 14 14"><path d="M5.38 8.01 L5.48 8.16 L5.61 8.29 L5.76 8.41 L5.93 8.52 L6.12 8.60 L6.32 8.66 L6.54 8.69 L6.77 8.69 L7.00 8.66 L7.23 8.59 L7.47 8.50 L7.69 8.37 L7.90 8.20 L8.09 8.01 L8.25 7.79 L8.39 7.54 L8.50 7.27 L8.58 6.98 L8.62 6.67 L8.61 6.35 L8.57 6.03 L8.48 5.71 L8.35 5.40 L8.18 5.10 L7.96 4.82 L7.71 4.57 L7.42 4.35 L7.09 4.16 L6.74 4.01 L6.36 3.90 L5.97 3.85 L5.56 3.84 L5.15 3.89 L4.75 3.99 L4.35 4.15 L3.97 4.36 L3.61 4.62 L3.28 4.93 L2.99 5.28 L2.75 5.67 L2.55 6.10 L2.41 6.56 L2.32 7.04 L2.30 7.53 L2.34 8.04 L2.44 8.53 L2.61 9.02 L2.84 9.49 L3.14 9.93 L3.49 10.34 L3.90 10.71 L4.36 11.02 L4.86 11.27 L5.40 11.47 L5.96 11.59 L6.54 11.65 L7.13 11.63 L7.72 11.53 L8.31 11.36 L8.87 11.11 L9.40 10.79 L9.90 10.40 L10.34 9.94 L10.73 9.43 L11.05 8.86 L11.31 8.25 L11.48 7.61 L11.58 6.94 L11.59 6.26 L11.51 5.58" fill="none" stroke="#bdbdbd" stroke-width="1.5" stroke-linecap="round"/><circle cx="11.6" cy="9.6" r="0.9" fill="#d0d0d0"/><circle cx="10" cy="11.8" r="0.9" fill="#d0d0d0"/><rect x="12.3" y="3.5" width="0.9" height="3.2" fill="#bdbdbd"/></svg>
<div class="a" style="left:152px;top:747.04px;width:71px;height:14.6px;background:#1d1d1d;"></div>
<div class="t" style="left:159.5px;top:748.89px;font-size:12.35px;line-height:12.35px;color:#bababa;transform:scaleX(0.938);">No Matte</div>
<svg class="a" style="left:210px;top:752.34px;" width="9" height="6" viewBox="0 0 9 6"><path d="M1 1 L4.5 4 L8 1" stroke="#a8a8a8" stroke-width="1.2" fill="none"/></svg>
<svg class="a" style="left:262px;top:747.0400000000001px;" width="14" height="14" viewBox="0 0 14 14"><path d="M5.61 6.55 L5.48 6.66 L5.38 6.81 L5.29 6.98 L5.23 7.18 L5.21 7.39 L5.22 7.61 L5.27 7.84 L5.36 8.06 L5.49 8.28 L5.66 8.48 L5.87 8.65 L6.11 8.80 L6.39 8.91 L6.69 8.97 L7.00 8.99 L7.32 8.95 L7.65 8.86 L7.96 8.72 L8.26 8.53 L8.53 8.28 L8.77 7.98 L8.96 7.64 L9.10 7.27 L9.18 6.87 L9.19 6.45 L9.14 6.02 L9.03 5.60 L8.84 5.19 L8.58 4.80 L8.27 4.45 L7.89 4.15 L7.46 3.91 L6.99 3.73 L6.48 3.62 L5.96 3.59 L5.43 3.65 L4.90 3.79 L4.39 4.01 L3.91 4.32 L3.48 4.70 L3.10 5.15 L2.79 5.67 L2.56 6.23 L2.42 6.84 L2.38 7.46 L2.43 8.10 L2.58 8.74 L2.83 9.35 L3.18 9.93 L3.62 10.45 L4.14 10.91 L4.73 11.29 L5.39 11.58 L6.09 11.76 L6.83 11.84 L7.57 11.80 L8.32 11.65 L9.04 11.38 L9.72 11.00 L10.34 10.51 L10.89 9.92 L11.34 9.25 L11.70 8.51 L11.93 7.71 L12.05 6.88 L12.03 6.02 L11.89 5.17 L11.61 4.34 L11.20 3.55 L10.67 2.83" fill="none" stroke="#bdbdbd" stroke-width="1.5" stroke-linecap="round"/></svg>
<div class="a" style="left:283px;top:747.04px;width:93.3px;height:14.6px;background:#1d1d1d;"></div>
<div class="t" style="left:290px;top:748.89px;font-size:12.35px;line-height:12.35px;color:#bababa;transform:scaleX(0.915);">None</div>
<svg class="a" style="left:362px;top:752.34px;" width="9" height="6" viewBox="0 0 9 6"><path d="M1 1 L4.5 4 L8 1" stroke="#a8a8a8" stroke-width="1.2" fill="none"/></svg>
<div class="a" style="left:0px;top:764.96px;width:4px;height:14.2px;background:#292929;"></div>
<div class="a" style="left:7px;top:764.96px;width:13.5px;height:14.2px;background:#292929;"></div>
<div class="a" style="left:20.5px;top:763.76px;width:18.5px;height:17.92px;background:#393939;"></div>
<div class="a" style="left:39.2px;top:764.96px;width:71.4px;height:14.6px;background:#1d1d1d;"></div>
<div class="t" style="left:47px;top:766.81px;font-size:12.35px;line-height:12.35px;color:#bababa;transform:scaleX(0.980);">Normal</div>
<svg class="a" style="left:97px;top:770.26px;" width="9" height="6" viewBox="0 0 9 6"><path d="M1 1 L4.5 4 L8 1" stroke="#a8a8a8" stroke-width="1.2" fill="none"/></svg>
<div class="a" style="left:116px;top:764.96px;width:13.3px;height:14.2px;background:#2a2a2a;"></div>
<div class="a" style="left:131px;top:763.76px;width:20px;height:17.92px;background:#383838;"></div>
<svg class="a" style="left:135px;top:764.96px;" width="14" height="14" viewBox="0 0 14 14"><path d="M5.38 8.01 L5.48 8.16 L5.61 8.29 L5.76 8.41 L5.93 8.52 L6.12 8.60 L6.32 8.66 L6.54 8.69 L6.77 8.69 L7.00 8.66 L7.23 8.59 L7.47 8.50 L7.69 8.37 L7.90 8.20 L8.09 8.01 L8.25 7.79 L8.39 7.54 L8.50 7.27 L8.58 6.98 L8.62 6.67 L8.61 6.35 L8.57 6.03 L8.48 5.71 L8.35 5.40 L8.18 5.10 L7.96 4.82 L7.71 4.57 L7.42 4.35 L7.09 4.16 L6.74 4.01 L6.36 3.90 L5.97 3.85 L5.56 3.84 L5.15 3.89 L4.75 3.99 L4.35 4.15 L3.97 4.36 L3.61 4.62 L3.28 4.93 L2.99 5.28 L2.75 5.67 L2.55 6.10 L2.41 6.56 L2.32 7.04 L2.30 7.53 L2.34 8.04 L2.44 8.53 L2.61 9.02 L2.84 9.49 L3.14 9.93 L3.49 10.34 L3.90 10.71 L4.36 11.02 L4.86 11.27 L5.40 11.47 L5.96 11.59 L6.54 11.65 L7.13 11.63 L7.72 11.53 L8.31 11.36 L8.87 11.11 L9.40 10.79 L9.90 10.40 L10.34 9.94 L10.73 9.43 L11.05 8.86 L11.31 8.25 L11.48 7.61 L11.58 6.94 L11.59 6.26 L11.51 5.58" fill="none" stroke="#bdbdbd" stroke-width="1.5" stroke-linecap="round"/><circle cx="11.6" cy="9.6" r="0.9" fill="#d0d0d0"/><circle cx="10" cy="11.8" r="0.9" fill="#d0d0d0"/><rect x="12.3" y="3.5" width="0.9" height="3.2" fill="#bdbdbd"/></svg>
<div class="a" style="left:152px;top:764.96px;width:71px;height:14.6px;background:#1d1d1d;"></div>
<div class="t" style="left:159.5px;top:766.81px;font-size:12.35px;line-height:12.35px;color:#bababa;transform:scaleX(0.938);">No Matte</div>
<svg class="a" style="left:210px;top:770.26px;" width="9" height="6" viewBox="0 0 9 6"><path d="M1 1 L4.5 4 L8 1" stroke="#a8a8a8" stroke-width="1.2" fill="none"/></svg>
<svg class="a" style="left:262px;top:764.96px;" width="14" height="14" viewBox="0 0 14 14"><path d="M5.61 6.55 L5.48 6.66 L5.38 6.81 L5.29 6.98 L5.23 7.18 L5.21 7.39 L5.22 7.61 L5.27 7.84 L5.36 8.06 L5.49 8.28 L5.66 8.48 L5.87 8.65 L6.11 8.80 L6.39 8.91 L6.69 8.97 L7.00 8.99 L7.32 8.95 L7.65 8.86 L7.96 8.72 L8.26 8.53 L8.53 8.28 L8.77 7.98 L8.96 7.64 L9.10 7.27 L9.18 6.87 L9.19 6.45 L9.14 6.02 L9.03 5.60 L8.84 5.19 L8.58 4.80 L8.27 4.45 L7.89 4.15 L7.46 3.91 L6.99 3.73 L6.48 3.62 L5.96 3.59 L5.43 3.65 L4.90 3.79 L4.39 4.01 L3.91 4.32 L3.48 4.70 L3.10 5.15 L2.79 5.67 L2.56 6.23 L2.42 6.84 L2.38 7.46 L2.43 8.10 L2.58 8.74 L2.83 9.35 L3.18 9.93 L3.62 10.45 L4.14 10.91 L4.73 11.29 L5.39 11.58 L6.09 11.76 L6.83 11.84 L7.57 11.80 L8.32 11.65 L9.04 11.38 L9.72 11.00 L10.34 10.51 L10.89 9.92 L11.34 9.25 L11.70 8.51 L11.93 7.71 L12.05 6.88 L12.03 6.02 L11.89 5.17 L11.61 4.34 L11.20 3.55 L10.67 2.83" fill="none" stroke="#bdbdbd" stroke-width="1.5" stroke-linecap="round"/></svg>
<div class="a" style="left:283px;top:764.96px;width:93.3px;height:14.6px;background:#1d1d1d;"></div>
<div class="t" style="left:290px;top:766.81px;font-size:12.35px;line-height:12.35px;color:#bababa;transform:scaleX(0.915);">None</div>
<svg class="a" style="left:362px;top:770.26px;" width="9" height="6" viewBox="0 0 9 6"><path d="M1 1 L4.5 4 L8 1" stroke="#a8a8a8" stroke-width="1.2" fill="none"/></svg>
<div class="a" style="left:0px;top:782.88px;width:4px;height:14.2px;background:#292929;"></div>
<div class="a" style="left:7px;top:782.88px;width:13.5px;height:14.2px;background:#292929;"></div>
<div class="a" style="left:20.5px;top:781.68px;width:18.5px;height:17.92px;background:#393939;"></div>
<div class="a" style="left:39.2px;top:782.88px;width:71.4px;height:14.6px;background:#1d1d1d;"></div>
<div class="t" style="left:47px;top:784.73px;font-size:12.35px;line-height:12.35px;color:#bababa;transform:scaleX(0.980);">Normal</div>
<svg class="a" style="left:97px;top:788.1800000000001px;" width="9" height="6" viewBox="0 0 9 6"><path d="M1 1 L4.5 4 L8 1" stroke="#a8a8a8" stroke-width="1.2" fill="none"/></svg>
<div class="a" style="left:116px;top:782.88px;width:13.3px;height:14.2px;background:#2a2a2a;"></div>
<div class="a" style="left:131px;top:781.68px;width:20px;height:17.92px;background:#383838;"></div>
<svg class="a" style="left:135px;top:782.8800000000001px;" width="14" height="14" viewBox="0 0 14 14"><path d="M5.38 8.01 L5.48 8.16 L5.61 8.29 L5.76 8.41 L5.93 8.52 L6.12 8.60 L6.32 8.66 L6.54 8.69 L6.77 8.69 L7.00 8.66 L7.23 8.59 L7.47 8.50 L7.69 8.37 L7.90 8.20 L8.09 8.01 L8.25 7.79 L8.39 7.54 L8.50 7.27 L8.58 6.98 L8.62 6.67 L8.61 6.35 L8.57 6.03 L8.48 5.71 L8.35 5.40 L8.18 5.10 L7.96 4.82 L7.71 4.57 L7.42 4.35 L7.09 4.16 L6.74 4.01 L6.36 3.90 L5.97 3.85 L5.56 3.84 L5.15 3.89 L4.75 3.99 L4.35 4.15 L3.97 4.36 L3.61 4.62 L3.28 4.93 L2.99 5.28 L2.75 5.67 L2.55 6.10 L2.41 6.56 L2.32 7.04 L2.30 7.53 L2.34 8.04 L2.44 8.53 L2.61 9.02 L2.84 9.49 L3.14 9.93 L3.49 10.34 L3.90 10.71 L4.36 11.02 L4.86 11.27 L5.40 11.47 L5.96 11.59 L6.54 11.65 L7.13 11.63 L7.72 11.53 L8.31 11.36 L8.87 11.11 L9.40 10.79 L9.90 10.40 L10.34 9.94 L10.73 9.43 L11.05 8.86 L11.31 8.25 L11.48 7.61 L11.58 6.94 L11.59 6.26 L11.51 5.58" fill="none" stroke="#bdbdbd" stroke-width="1.5" stroke-linecap="round"/><circle cx="11.6" cy="9.6" r="0.9" fill="#d0d0d0"/><circle cx="10" cy="11.8" r="0.9" fill="#d0d0d0"/><rect x="12.3" y="3.5" width="0.9" height="3.2" fill="#bdbdbd"/></svg>
<div class="a" style="left:152px;top:782.88px;width:71px;height:14.6px;background:#1d1d1d;"></div>
<div class="t" style="left:159.5px;top:784.73px;font-size:12.35px;line-height:12.35px;color:#bababa;transform:scaleX(0.938);">No Matte</div>
<svg class="a" style="left:210px;top:788.1800000000001px;" width="9" height="6" viewBox="0 0 9 6"><path d="M1 1 L4.5 4 L8 1" stroke="#a8a8a8" stroke-width="1.2" fill="none"/></svg>
<svg class="a" style="left:262px;top:782.8800000000001px;" width="14" height="14" viewBox="0 0 14 14"><path d="M5.61 6.55 L5.48 6.66 L5.38 6.81 L5.29 6.98 L5.23 7.18 L5.21 7.39 L5.22 7.61 L5.27 7.84 L5.36 8.06 L5.49 8.28 L5.66 8.48 L5.87 8.65 L6.11 8.80 L6.39 8.91 L6.69 8.97 L7.00 8.99 L7.32 8.95 L7.65 8.86 L7.96 8.72 L8.26 8.53 L8.53 8.28 L8.77 7.98 L8.96 7.64 L9.10 7.27 L9.18 6.87 L9.19 6.45 L9.14 6.02 L9.03 5.60 L8.84 5.19 L8.58 4.80 L8.27 4.45 L7.89 4.15 L7.46 3.91 L6.99 3.73 L6.48 3.62 L5.96 3.59 L5.43 3.65 L4.90 3.79 L4.39 4.01 L3.91 4.32 L3.48 4.70 L3.10 5.15 L2.79 5.67 L2.56 6.23 L2.42 6.84 L2.38 7.46 L2.43 8.10 L2.58 8.74 L2.83 9.35 L3.18 9.93 L3.62 10.45 L4.14 10.91 L4.73 11.29 L5.39 11.58 L6.09 11.76 L6.83 11.84 L7.57 11.80 L8.32 11.65 L9.04 11.38 L9.72 11.00 L10.34 10.51 L10.89 9.92 L11.34 9.25 L11.70 8.51 L11.93 7.71 L12.05 6.88 L12.03 6.02 L11.89 5.17 L11.61 4.34 L11.20 3.55 L10.67 2.83" fill="none" stroke="#bdbdbd" stroke-width="1.5" stroke-linecap="round"/></svg>
<div class="a" style="left:283px;top:782.88px;width:93.3px;height:14.6px;background:#1d1d1d;"></div>
<div class="t" style="left:290px;top:784.73px;font-size:12.35px;line-height:12.35px;color:#bababa;transform:scaleX(0.915);">None</div>
<svg class="a" style="left:362px;top:788.1800000000001px;" width="9" height="6" viewBox="0 0 9 6"><path d="M1 1 L4.5 4 L8 1" stroke="#a8a8a8" stroke-width="1.2" fill="none"/></svg>
<div class="a" style="left:0px;top:800.8px;width:4px;height:14.2px;background:#292929;"></div>
<div class="a" style="left:7px;top:800.8px;width:13.5px;height:14.2px;background:#292929;"></div>
<div class="a" style="left:20.5px;top:799.6px;width:18.5px;height:17.92px;background:#393939;"></div>
<div class="a" style="left:39.2px;top:800.8px;width:71.4px;height:14.6px;background:#1d1d1d;"></div>
<div class="t" style="left:47px;top:802.65px;font-size:12.35px;line-height:12.35px;color:#bababa;transform:scaleX(0.980);">Normal</div>
<svg class="a" style="left:97px;top:806.1px;" width="9" height="6" viewBox="0 0 9 6"><path d="M1 1 L4.5 4 L8 1" stroke="#a8a8a8" stroke-width="1.2" fill="none"/></svg>
<div class="a" style="left:116px;top:800.8px;width:13.3px;height:14.2px;background:#2a2a2a;"></div>
<div class="a" style="left:131px;top:799.6px;width:20px;height:17.92px;background:#383838;"></div>
<svg class="a" style="left:135px;top:800.8000000000001px;" width="14" height="14" viewBox="0 0 14 14"><path d="M5.38 8.01 L5.48 8.16 L5.61 8.29 L5.76 8.41 L5.93 8.52 L6.12 8.60 L6.32 8.66 L6.54 8.69 L6.77 8.69 L7.00 8.66 L7.23 8.59 L7.47 8.50 L7.69 8.37 L7.90 8.20 L8.09 8.01 L8.25 7.79 L8.39 7.54 L8.50 7.27 L8.58 6.98 L8.62 6.67 L8.61 6.35 L8.57 6.03 L8.48 5.71 L8.35 5.40 L8.18 5.10 L7.96 4.82 L7.71 4.57 L7.42 4.35 L7.09 4.16 L6.74 4.01 L6.36 3.90 L5.97 3.85 L5.56 3.84 L5.15 3.89 L4.75 3.99 L4.35 4.15 L3.97 4.36 L3.61 4.62 L3.28 4.93 L2.99 5.28 L2.75 5.67 L2.55 6.10 L2.41 6.56 L2.32 7.04 L2.30 7.53 L2.34 8.04 L2.44 8.53 L2.61 9.02 L2.84 9.49 L3.14 9.93 L3.49 10.34 L3.90 10.71 L4.36 11.02 L4.86 11.27 L5.40 11.47 L5.96 11.59 L6.54 11.65 L7.13 11.63 L7.72 11.53 L8.31 11.36 L8.87 11.11 L9.40 10.79 L9.90 10.40 L10.34 9.94 L10.73 9.43 L11.05 8.86 L11.31 8.25 L11.48 7.61 L11.58 6.94 L11.59 6.26 L11.51 5.58" fill="none" stroke="#bdbdbd" stroke-width="1.5" stroke-linecap="round"/><circle cx="11.6" cy="9.6" r="0.9" fill="#d0d0d0"/><circle cx="10" cy="11.8" r="0.9" fill="#d0d0d0"/><rect x="12.3" y="3.5" width="0.9" height="3.2" fill="#bdbdbd"/></svg>
<div class="a" style="left:152px;top:800.8px;width:71px;height:14.6px;background:#1d1d1d;"></div>
<div class="t" style="left:159.5px;top:802.65px;font-size:12.35px;line-height:12.35px;color:#bababa;transform:scaleX(0.938);">No Matte</div>
<svg class="a" style="left:210px;top:806.1px;" width="9" height="6" viewBox="0 0 9 6"><path d="M1 1 L4.5 4 L8 1" stroke="#a8a8a8" stroke-width="1.2" fill="none"/></svg>
<svg class="a" style="left:262px;top:800.8000000000001px;" width="14" height="14" viewBox="0 0 14 14"><path d="M5.61 6.55 L5.48 6.66 L5.38 6.81 L5.29 6.98 L5.23 7.18 L5.21 7.39 L5.22 7.61 L5.27 7.84 L5.36 8.06 L5.49 8.28 L5.66 8.48 L5.87 8.65 L6.11 8.80 L6.39 8.91 L6.69 8.97 L7.00 8.99 L7.32 8.95 L7.65 8.86 L7.96 8.72 L8.26 8.53 L8.53 8.28 L8.77 7.98 L8.96 7.64 L9.10 7.27 L9.18 6.87 L9.19 6.45 L9.14 6.02 L9.03 5.60 L8.84 5.19 L8.58 4.80 L8.27 4.45 L7.89 4.15 L7.46 3.91 L6.99 3.73 L6.48 3.62 L5.96 3.59 L5.43 3.65 L4.90 3.79 L4.39 4.01 L3.91 4.32 L3.48 4.70 L3.10 5.15 L2.79 5.67 L2.56 6.23 L2.42 6.84 L2.38 7.46 L2.43 8.10 L2.58 8.74 L2.83 9.35 L3.18 9.93 L3.62 10.45 L4.14 10.91 L4.73 11.29 L5.39 11.58 L6.09 11.76 L6.83 11.84 L7.57 11.80 L8.32 11.65 L9.04 11.38 L9.72 11.00 L10.34 10.51 L10.89 9.92 L11.34 9.25 L11.70 8.51 L11.93 7.71 L12.05 6.88 L12.03 6.02 L11.89 5.17 L11.61 4.34 L11.20 3.55 L10.67 2.83" fill="none" stroke="#bdbdbd" stroke-width="1.5" stroke-linecap="round"/></svg>
<div class="a" style="left:283px;top:800.8px;width:93.3px;height:14.6px;background:#1d1d1d;"></div>
<div class="t" style="left:290px;top:802.65px;font-size:12.35px;line-height:12.35px;color:#bababa;transform:scaleX(0.915);">None</div>
<svg class="a" style="left:362px;top:806.1px;" width="9" height="6" viewBox="0 0 9 6"><path d="M1 1 L4.5 4 L8 1" stroke="#a8a8a8" stroke-width="1.2" fill="none"/></svg>
<div class="a" style="left:0px;top:818.72px;width:4px;height:14.2px;background:#292929;"></div>
<div class="a" style="left:7px;top:818.72px;width:13.5px;height:14.2px;background:#292929;"></div>
<div class="a" style="left:20.5px;top:817.52px;width:18.5px;height:17.92px;background:#393939;"></div>
<div class="a" style="left:39.2px;top:818.72px;width:71.4px;height:14.6px;background:#1d1d1d;"></div>
<div class="t" style="left:47px;top:820.57px;font-size:12.35px;line-height:12.35px;color:#bababa;transform:scaleX(0.980);">Normal</div>
<svg class="a" style="left:97px;top:824.02px;" width="9" height="6" viewBox="0 0 9 6"><path d="M1 1 L4.5 4 L8 1" stroke="#a8a8a8" stroke-width="1.2" fill="none"/></svg>
<div class="a" style="left:116px;top:818.72px;width:13.3px;height:14.2px;background:#2a2a2a;"></div>
<div class="a" style="left:131px;top:817.52px;width:20px;height:17.92px;background:#383838;"></div>
<svg class="a" style="left:135px;top:818.72px;" width="14" height="14" viewBox="0 0 14 14"><path d="M5.38 8.01 L5.48 8.16 L5.61 8.29 L5.76 8.41 L5.93 8.52 L6.12 8.60 L6.32 8.66 L6.54 8.69 L6.77 8.69 L7.00 8.66 L7.23 8.59 L7.47 8.50 L7.69 8.37 L7.90 8.20 L8.09 8.01 L8.25 7.79 L8.39 7.54 L8.50 7.27 L8.58 6.98 L8.62 6.67 L8.61 6.35 L8.57 6.03 L8.48 5.71 L8.35 5.40 L8.18 5.10 L7.96 4.82 L7.71 4.57 L7.42 4.35 L7.09 4.16 L6.74 4.01 L6.36 3.90 L5.97 3.85 L5.56 3.84 L5.15 3.89 L4.75 3.99 L4.35 4.15 L3.97 4.36 L3.61 4.62 L3.28 4.93 L2.99 5.28 L2.75 5.67 L2.55 6.10 L2.41 6.56 L2.32 7.04 L2.30 7.53 L2.34 8.04 L2.44 8.53 L2.61 9.02 L2.84 9.49 L3.14 9.93 L3.49 10.34 L3.90 10.71 L4.36 11.02 L4.86 11.27 L5.40 11.47 L5.96 11.59 L6.54 11.65 L7.13 11.63 L7.72 11.53 L8.31 11.36 L8.87 11.11 L9.40 10.79 L9.90 10.40 L10.34 9.94 L10.73 9.43 L11.05 8.86 L11.31 8.25 L11.48 7.61 L11.58 6.94 L11.59 6.26 L11.51 5.58" fill="none" stroke="#bdbdbd" stroke-width="1.5" stroke-linecap="round"/><circle cx="11.6" cy="9.6" r="0.9" fill="#d0d0d0"/><circle cx="10" cy="11.8" r="0.9" fill="#d0d0d0"/><rect x="12.3" y="3.5" width="0.9" height="3.2" fill="#bdbdbd"/></svg>
<div class="a" style="left:152px;top:818.72px;width:71px;height:14.6px;background:#1d1d1d;"></div>
<div class="t" style="left:159.5px;top:820.57px;font-size:12.35px;line-height:12.35px;color:#bababa;transform:scaleX(0.938);">No Matte</div>
<svg class="a" style="left:210px;top:824.02px;" width="9" height="6" viewBox="0 0 9 6"><path d="M1 1 L4.5 4 L8 1" stroke="#a8a8a8" stroke-width="1.2" fill="none"/></svg>
<svg class="a" style="left:262px;top:818.72px;" width="14" height="14" viewBox="0 0 14 14"><path d="M5.61 6.55 L5.48 6.66 L5.38 6.81 L5.29 6.98 L5.23 7.18 L5.21 7.39 L5.22 7.61 L5.27 7.84 L5.36 8.06 L5.49 8.28 L5.66 8.48 L5.87 8.65 L6.11 8.80 L6.39 8.91 L6.69 8.97 L7.00 8.99 L7.32 8.95 L7.65 8.86 L7.96 8.72 L8.26 8.53 L8.53 8.28 L8.77 7.98 L8.96 7.64 L9.10 7.27 L9.18 6.87 L9.19 6.45 L9.14 6.02 L9.03 5.60 L8.84 5.19 L8.58 4.80 L8.27 4.45 L7.89 4.15 L7.46 3.91 L6.99 3.73 L6.48 3.62 L5.96 3.59 L5.43 3.65 L4.90 3.79 L4.39 4.01 L3.91 4.32 L3.48 4.70 L3.10 5.15 L2.79 5.67 L2.56 6.23 L2.42 6.84 L2.38 7.46 L2.43 8.10 L2.58 8.74 L2.83 9.35 L3.18 9.93 L3.62 10.45 L4.14 10.91 L4.73 11.29 L5.39 11.58 L6.09 11.76 L6.83 11.84 L7.57 11.80 L8.32 11.65 L9.04 11.38 L9.72 11.00 L10.34 10.51 L10.89 9.92 L11.34 9.25 L11.70 8.51 L11.93 7.71 L12.05 6.88 L12.03 6.02 L11.89 5.17 L11.61 4.34 L11.20 3.55 L10.67 2.83" fill="none" stroke="#bdbdbd" stroke-width="1.5" stroke-linecap="round"/></svg>
<div class="a" style="left:283px;top:818.72px;width:93.3px;height:14.6px;background:#1d1d1d;"></div>
<div class="t" style="left:290px;top:820.57px;font-size:12.35px;line-height:12.35px;color:#bababa;transform:scaleX(0.915);">None</div>
<svg class="a" style="left:362px;top:824.02px;" width="9" height="6" viewBox="0 0 9 6"><path d="M1 1 L4.5 4 L8 1" stroke="#a8a8a8" stroke-width="1.2" fill="none"/></svg>
<div class="a" style="left:0px;top:836.64px;width:4px;height:14.2px;background:#292929;"></div>
<div class="a" style="left:7px;top:836.64px;width:13.5px;height:14.2px;background:#292929;"></div>
<div class="a" style="left:20.5px;top:835.44px;width:18.5px;height:17.92px;background:#393939;"></div>
<div class="a" style="left:39.2px;top:836.64px;width:71.4px;height:14.6px;background:#1d1d1d;"></div>
<div class="t" style="left:47px;top:838.49px;font-size:12.35px;line-height:12.35px;color:#bababa;transform:scaleX(0.980);">Normal</div>
<svg class="a" style="left:97px;top:841.94px;" width="9" height="6" viewBox="0 0 9 6"><path d="M1 1 L4.5 4 L8 1" stroke="#a8a8a8" stroke-width="1.2" fill="none"/></svg>
<div class="a" style="left:116px;top:836.64px;width:13.3px;height:14.2px;background:#2a2a2a;"></div>
<div class="a" style="left:131px;top:835.44px;width:20px;height:17.92px;background:#383838;"></div>
<svg class="a" style="left:135px;top:836.6400000000001px;" width="14" height="14" viewBox="0 0 14 14"><path d="M5.38 8.01 L5.48 8.16 L5.61 8.29 L5.76 8.41 L5.93 8.52 L6.12 8.60 L6.32 8.66 L6.54 8.69 L6.77 8.69 L7.00 8.66 L7.23 8.59 L7.47 8.50 L7.69 8.37 L7.90 8.20 L8.09 8.01 L8.25 7.79 L8.39 7.54 L8.50 7.27 L8.58 6.98 L8.62 6.67 L8.61 6.35 L8.57 6.03 L8.48 5.71 L8.35 5.40 L8.18 5.10 L7.96 4.82 L7.71 4.57 L7.42 4.35 L7.09 4.16 L6.74 4.01 L6.36 3.90 L5.97 3.85 L5.56 3.84 L5.15 3.89 L4.75 3.99 L4.35 4.15 L3.97 4.36 L3.61 4.62 L3.28 4.93 L2.99 5.28 L2.75 5.67 L2.55 6.10 L2.41 6.56 L2.32 7.04 L2.30 7.53 L2.34 8.04 L2.44 8.53 L2.61 9.02 L2.84 9.49 L3.14 9.93 L3.49 10.34 L3.90 10.71 L4.36 11.02 L4.86 11.27 L5.40 11.47 L5.96 11.59 L6.54 11.65 L7.13 11.63 L7.72 11.53 L8.31 11.36 L8.87 11.11 L9.40 10.79 L9.90 10.40 L10.34 9.94 L10.73 9.43 L11.05 8.86 L11.31 8.25 L11.48 7.61 L11.58 6.94 L11.59 6.26 L11.51 5.58" fill="none" stroke="#bdbdbd" stroke-width="1.5" stroke-linecap="round"/><circle cx="11.6" cy="9.6" r="0.9" fill="#d0d0d0"/><circle cx="10" cy="11.8" r="0.9" fill="#d0d0d0"/><rect x="12.3" y="3.5" width="0.9" height="3.2" fill="#bdbdbd"/></svg>
<div class="a" style="left:152px;top:836.64px;width:71px;height:14.6px;background:#1d1d1d;"></div>
<div class="t" style="left:159.5px;top:838.49px;font-size:12.35px;line-height:12.35px;color:#bababa;transform:scaleX(0.938);">No Matte</div>
<svg class="a" style="left:210px;top:841.94px;" width="9" height="6" viewBox="0 0 9 6"><path d="M1 1 L4.5 4 L8 1" stroke="#a8a8a8" stroke-width="1.2" fill="none"/></svg>
<svg class="a" style="left:262px;top:836.6400000000001px;" width="14" height="14" viewBox="0 0 14 14"><path d="M5.61 6.55 L5.48 6.66 L5.38 6.81 L5.29 6.98 L5.23 7.18 L5.21 7.39 L5.22 7.61 L5.27 7.84 L5.36 8.06 L5.49 8.28 L5.66 8.48 L5.87 8.65 L6.11 8.80 L6.39 8.91 L6.69 8.97 L7.00 8.99 L7.32 8.95 L7.65 8.86 L7.96 8.72 L8.26 8.53 L8.53 8.28 L8.77 7.98 L8.96 7.64 L9.10 7.27 L9.18 6.87 L9.19 6.45 L9.14 6.02 L9.03 5.60 L8.84 5.19 L8.58 4.80 L8.27 4.45 L7.89 4.15 L7.46 3.91 L6.99 3.73 L6.48 3.62 L5.96 3.59 L5.43 3.65 L4.90 3.79 L4.39 4.01 L3.91 4.32 L3.48 4.70 L3.10 5.15 L2.79 5.67 L2.56 6.23 L2.42 6.84 L2.38 7.46 L2.43 8.10 L2.58 8.74 L2.83 9.35 L3.18 9.93 L3.62 10.45 L4.14 10.91 L4.73 11.29 L5.39 11.58 L6.09 11.76 L6.83 11.84 L7.57 11.80 L8.32 11.65 L9.04 11.38 L9.72 11.00 L10.34 10.51 L10.89 9.92 L11.34 9.25 L11.70 8.51 L11.93 7.71 L12.05 6.88 L12.03 6.02 L11.89 5.17 L11.61 4.34 L11.20 3.55 L10.67 2.83" fill="none" stroke="#bdbdbd" stroke-width="1.5" stroke-linecap="round"/></svg>
<div class="a" style="left:283px;top:836.64px;width:93.3px;height:14.6px;background:#1d1d1d;"></div>
<div class="t" style="left:290px;top:838.49px;font-size:12.35px;line-height:12.35px;color:#bababa;transform:scaleX(0.915);">None</div>
<svg class="a" style="left:362px;top:841.94px;" width="9" height="6" viewBox="0 0 9 6"><path d="M1 1 L4.5 4 L8 1" stroke="#a8a8a8" stroke-width="1.2" fill="none"/></svg>
<div class="a" style="left:0px;top:854.56px;width:4px;height:14.2px;background:#292929;"></div>
<div class="a" style="left:7px;top:854.56px;width:13.5px;height:14.2px;background:#292929;"></div>
<div class="a" style="left:20.5px;top:853.36px;width:18.5px;height:17.92px;background:#393939;"></div>
<div class="a" style="left:39.2px;top:854.56px;width:71.4px;height:14.6px;background:#1d1d1d;"></div>
<div class="t" style="left:47px;top:856.41px;font-size:12.35px;line-height:12.35px;color:#bababa;transform:scaleX(0.980);">Normal</div>
<svg class="a" style="left:97px;top:859.86px;" width="9" height="6" viewBox="0 0 9 6"><path d="M1 1 L4.5 4 L8 1" stroke="#a8a8a8" stroke-width="1.2" fill="none"/></svg>
<div class="a" style="left:116px;top:854.56px;width:13.3px;height:14.2px;background:#2a2a2a;"></div>
<div class="a" style="left:131px;top:853.36px;width:20px;height:17.92px;background:#383838;"></div>
<svg class="a" style="left:135px;top:854.5600000000001px;" width="14" height="14" viewBox="0 0 14 14"><path d="M5.38 8.01 L5.48 8.16 L5.61 8.29 L5.76 8.41 L5.93 8.52 L6.12 8.60 L6.32 8.66 L6.54 8.69 L6.77 8.69 L7.00 8.66 L7.23 8.59 L7.47 8.50 L7.69 8.37 L7.90 8.20 L8.09 8.01 L8.25 7.79 L8.39 7.54 L8.50 7.27 L8.58 6.98 L8.62 6.67 L8.61 6.35 L8.57 6.03 L8.48 5.71 L8.35 5.40 L8.18 5.10 L7.96 4.82 L7.71 4.57 L7.42 4.35 L7.09 4.16 L6.74 4.01 L6.36 3.90 L5.97 3.85 L5.56 3.84 L5.15 3.89 L4.75 3.99 L4.35 4.15 L3.97 4.36 L3.61 4.62 L3.28 4.93 L2.99 5.28 L2.75 5.67 L2.55 6.10 L2.41 6.56 L2.32 7.04 L2.30 7.53 L2.34 8.04 L2.44 8.53 L2.61 9.02 L2.84 9.49 L3.14 9.93 L3.49 10.34 L3.90 10.71 L4.36 11.02 L4.86 11.27 L5.40 11.47 L5.96 11.59 L6.54 11.65 L7.13 11.63 L7.72 11.53 L8.31 11.36 L8.87 11.11 L9.40 10.79 L9.90 10.40 L10.34 9.94 L10.73 9.43 L11.05 8.86 L11.31 8.25 L11.48 7.61 L11.58 6.94 L11.59 6.26 L11.51 5.58" fill="none" stroke="#bdbdbd" stroke-width="1.5" stroke-linecap="round"/><circle cx="11.6" cy="9.6" r="0.9" fill="#d0d0d0"/><circle cx="10" cy="11.8" r="0.9" fill="#d0d0d0"/><rect x="12.3" y="3.5" width="0.9" height="3.2" fill="#bdbdbd"/></svg>
<div class="a" style="left:152px;top:854.56px;width:71px;height:14.6px;background:#1d1d1d;"></div>
<div class="t" style="left:159.5px;top:856.41px;font-size:12.35px;line-height:12.35px;color:#bababa;transform:scaleX(0.938);">No Matte</div>
<svg class="a" style="left:210px;top:859.86px;" width="9" height="6" viewBox="0 0 9 6"><path d="M1 1 L4.5 4 L8 1" stroke="#a8a8a8" stroke-width="1.2" fill="none"/></svg>
<svg class="a" style="left:262px;top:854.5600000000001px;" width="14" height="14" viewBox="0 0 14 14"><path d="M5.61 6.55 L5.48 6.66 L5.38 6.81 L5.29 6.98 L5.23 7.18 L5.21 7.39 L5.22 7.61 L5.27 7.84 L5.36 8.06 L5.49 8.28 L5.66 8.48 L5.87 8.65 L6.11 8.80 L6.39 8.91 L6.69 8.97 L7.00 8.99 L7.32 8.95 L7.65 8.86 L7.96 8.72 L8.26 8.53 L8.53 8.28 L8.77 7.98 L8.96 7.64 L9.10 7.27 L9.18 6.87 L9.19 6.45 L9.14 6.02 L9.03 5.60 L8.84 5.19 L8.58 4.80 L8.27 4.45 L7.89 4.15 L7.46 3.91 L6.99 3.73 L6.48 3.62 L5.96 3.59 L5.43 3.65 L4.90 3.79 L4.39 4.01 L3.91 4.32 L3.48 4.70 L3.10 5.15 L2.79 5.67 L2.56 6.23 L2.42 6.84 L2.38 7.46 L2.43 8.10 L2.58 8.74 L2.83 9.35 L3.18 9.93 L3.62 10.45 L4.14 10.91 L4.73 11.29 L5.39 11.58 L6.09 11.76 L6.83 11.84 L7.57 11.80 L8.32 11.65 L9.04 11.38 L9.72 11.00 L10.34 10.51 L10.89 9.92 L11.34 9.25 L11.70 8.51 L11.93 7.71 L12.05 6.88 L12.03 6.02 L11.89 5.17 L11.61 4.34 L11.20 3.55 L10.67 2.83" fill="none" stroke="#bdbdbd" stroke-width="1.5" stroke-linecap="round"/></svg>
<div class="a" style="left:283px;top:854.56px;width:93.3px;height:14.6px;background:#1d1d1d;"></div>
<div class="t" style="left:290px;top:856.41px;font-size:12.35px;line-height:12.35px;color:#bababa;transform:scaleX(0.915);">None</div>
<svg class="a" style="left:362px;top:859.86px;" width="9" height="6" viewBox="0 0 9 6"><path d="M1 1 L4.5 4 L8 1" stroke="#a8a8a8" stroke-width="1.2" fill="none"/></svg>
<div class="a" style="left:0px;top:872.48px;width:4px;height:14.2px;background:#292929;"></div>
<div class="a" style="left:7px;top:872.48px;width:13.5px;height:14.2px;background:#292929;"></div>
<div class="a" style="left:20.5px;top:871.28px;width:18.5px;height:17.92px;background:#393939;"></div>
<div class="a" style="left:39.2px;top:872.48px;width:71.4px;height:14.6px;background:#1d1d1d;"></div>
<div class="t" style="left:47px;top:874.33px;font-size:12.35px;line-height:12.35px;color:#bababa;transform:scaleX(0.980);">Normal</div>
<svg class="a" style="left:97px;top:877.78px;" width="9" height="6" viewBox="0 0 9 6"><path d="M1 1 L4.5 4 L8 1" stroke="#a8a8a8" stroke-width="1.2" fill="none"/></svg>
<div class="a" style="left:116px;top:872.48px;width:13.3px;height:14.2px;background:#2a2a2a;"></div>
<div class="a" style="left:131px;top:871.28px;width:20px;height:17.92px;background:#383838;"></div>
<svg class="a" style="left:135px;top:872.48px;" width="14" height="14" viewBox="0 0 14 14"><path d="M5.38 8.01 L5.48 8.16 L5.61 8.29 L5.76 8.41 L5.93 8.52 L6.12 8.60 L6.32 8.66 L6.54 8.69 L6.77 8.69 L7.00 8.66 L7.23 8.59 L7.47 8.50 L7.69 8.37 L7.90 8.20 L8.09 8.01 L8.25 7.79 L8.39 7.54 L8.50 7.27 L8.58 6.98 L8.62 6.67 L8.61 6.35 L8.57 6.03 L8.48 5.71 L8.35 5.40 L8.18 5.10 L7.96 4.82 L7.71 4.57 L7.42 4.35 L7.09 4.16 L6.74 4.01 L6.36 3.90 L5.97 3.85 L5.56 3.84 L5.15 3.89 L4.75 3.99 L4.35 4.15 L3.97 4.36 L3.61 4.62 L3.28 4.93 L2.99 5.28 L2.75 5.67 L2.55 6.10 L2.41 6.56 L2.32 7.04 L2.30 7.53 L2.34 8.04 L2.44 8.53 L2.61 9.02 L2.84 9.49 L3.14 9.93 L3.49 10.34 L3.90 10.71 L4.36 11.02 L4.86 11.27 L5.40 11.47 L5.96 11.59 L6.54 11.65 L7.13 11.63 L7.72 11.53 L8.31 11.36 L8.87 11.11 L9.40 10.79 L9.90 10.40 L10.34 9.94 L10.73 9.43 L11.05 8.86 L11.31 8.25 L11.48 7.61 L11.58 6.94 L11.59 6.26 L11.51 5.58" fill="none" stroke="#bdbdbd" stroke-width="1.5" stroke-linecap="round"/><circle cx="11.6" cy="9.6" r="0.9" fill="#d0d0d0"/><circle cx="10" cy="11.8" r="0.9" fill="#d0d0d0"/><rect x="12.3" y="3.5" width="0.9" height="3.2" fill="#bdbdbd"/></svg>
<div class="a" style="left:152px;top:872.48px;width:71px;height:14.6px;background:#1d1d1d;"></div>
<div class="t" style="left:159.5px;top:874.33px;font-size:12.35px;line-height:12.35px;color:#bababa;transform:scaleX(0.938);">No Matte</div>
<svg class="a" style="left:210px;top:877.78px;" width="9" height="6" viewBox="0 0 9 6"><path d="M1 1 L4.5 4 L8 1" stroke="#a8a8a8" stroke-width="1.2" fill="none"/></svg>
<svg class="a" style="left:262px;top:872.48px;" width="14" height="14" viewBox="0 0 14 14"><path d="M5.61 6.55 L5.48 6.66 L5.38 6.81 L5.29 6.98 L5.23 7.18 L5.21 7.39 L5.22 7.61 L5.27 7.84 L5.36 8.06 L5.49 8.28 L5.66 8.48 L5.87 8.65 L6.11 8.80 L6.39 8.91 L6.69 8.97 L7.00 8.99 L7.32 8.95 L7.65 8.86 L7.96 8.72 L8.26 8.53 L8.53 8.28 L8.77 7.98 L8.96 7.64 L9.10 7.27 L9.18 6.87 L9.19 6.45 L9.14 6.02 L9.03 5.60 L8.84 5.19 L8.58 4.80 L8.27 4.45 L7.89 4.15 L7.46 3.91 L6.99 3.73 L6.48 3.62 L5.96 3.59 L5.43 3.65 L4.90 3.79 L4.39 4.01 L3.91 4.32 L3.48 4.70 L3.10 5.15 L2.79 5.67 L2.56 6.23 L2.42 6.84 L2.38 7.46 L2.43 8.10 L2.58 8.74 L2.83 9.35 L3.18 9.93 L3.62 10.45 L4.14 10.91 L4.73 11.29 L5.39 11.58 L6.09 11.76 L6.83 11.84 L7.57 11.80 L8.32 11.65 L9.04 11.38 L9.72 11.00 L10.34 10.51 L10.89 9.92 L11.34 9.25 L11.70 8.51 L11.93 7.71 L12.05 6.88 L12.03 6.02 L11.89 5.17 L11.61 4.34 L11.20 3.55 L10.67 2.83" fill="none" stroke="#bdbdbd" stroke-width="1.5" stroke-linecap="round"/></svg>
<div class="a" style="left:283px;top:872.48px;width:93.3px;height:14.6px;background:#1d1d1d;"></div>
<div class="t" style="left:290px;top:874.33px;font-size:12.35px;line-height:12.35px;color:#bababa;transform:scaleX(0.915);">None</div>
<svg class="a" style="left:362px;top:877.78px;" width="9" height="6" viewBox="0 0 9 6"><path d="M1 1 L4.5 4 L8 1" stroke="#a8a8a8" stroke-width="1.2" fill="none"/></svg>
<div class="a" style="left:0px;top:890.4px;width:4px;height:14.2px;background:#292929;"></div>
<div class="a" style="left:7px;top:890.4px;width:13.5px;height:14.2px;background:#292929;"></div>
<div class="a" style="left:20.5px;top:889.2px;width:18.5px;height:17.92px;background:#393939;"></div>
<div class="a" style="left:39.2px;top:890.4px;width:71.4px;height:14.6px;background:#1d1d1d;"></div>
<div class="t" style="left:47px;top:892.25px;font-size:12.35px;line-height:12.35px;color:#bababa;transform:scaleX(0.980);">Normal</div>
<svg class="a" style="left:97px;top:895.7px;" width="9" height="6" viewBox="0 0 9 6"><path d="M1 1 L4.5 4 L8 1" stroke="#a8a8a8" stroke-width="1.2" fill="none"/></svg>
<div class="a" style="left:116px;top:890.4px;width:13.3px;height:14.2px;background:#2a2a2a;"></div>
<div class="a" style="left:131px;top:889.2px;width:20px;height:17.92px;background:#383838;"></div>
<svg class="a" style="left:135px;top:890.4000000000001px;" width="14" height="14" viewBox="0 0 14 14"><path d="M5.38 8.01 L5.48 8.16 L5.61 8.29 L5.76 8.41 L5.93 8.52 L6.12 8.60 L6.32 8.66 L6.54 8.69 L6.77 8.69 L7.00 8.66 L7.23 8.59 L7.47 8.50 L7.69 8.37 L7.90 8.20 L8.09 8.01 L8.25 7.79 L8.39 7.54 L8.50 7.27 L8.58 6.98 L8.62 6.67 L8.61 6.35 L8.57 6.03 L8.48 5.71 L8.35 5.40 L8.18 5.10 L7.96 4.82 L7.71 4.57 L7.42 4.35 L7.09 4.16 L6.74 4.01 L6.36 3.90 L5.97 3.85 L5.56 3.84 L5.15 3.89 L4.75 3.99 L4.35 4.15 L3.97 4.36 L3.61 4.62 L3.28 4.93 L2.99 5.28 L2.75 5.67 L2.55 6.10 L2.41 6.56 L2.32 7.04 L2.30 7.53 L2.34 8.04 L2.44 8.53 L2.61 9.02 L2.84 9.49 L3.14 9.93 L3.49 10.34 L3.90 10.71 L4.36 11.02 L4.86 11.27 L5.40 11.47 L5.96 11.59 L6.54 11.65 L7.13 11.63 L7.72 11.53 L8.31 11.36 L8.87 11.11 L9.40 10.79 L9.90 10.40 L10.34 9.94 L10.73 9.43 L11.05 8.86 L11.31 8.25 L11.48 7.61 L11.58 6.94 L11.59 6.26 L11.51 5.58" fill="none" stroke="#bdbdbd" stroke-width="1.5" stroke-linecap="round"/><circle cx="11.6" cy="9.6" r="0.9" fill="#d0d0d0"/><circle cx="10" cy="11.8" r="0.9" fill="#d0d0d0"/><rect x="12.3" y="3.5" width="0.9" height="3.2" fill="#bdbdbd"/></svg>
<div class="a" style="left:152px;top:890.4px;width:71px;height:14.6px;background:#1d1d1d;"></div>
<div class="t" style="left:159.5px;top:892.25px;font-size:12.35px;line-height:12.35px;color:#bababa;transform:scaleX(0.938);">No Matte</div>
<svg class="a" style="left:210px;top:895.7px;" width="9" height="6" viewBox="0 0 9 6"><path d="M1 1 L4.5 4 L8 1" stroke="#a8a8a8" stroke-width="1.2" fill="none"/></svg>
<svg class="a" style="left:262px;top:890.4000000000001px;" width="14" height="14" viewBox="0 0 14 14"><path d="M5.61 6.55 L5.48 6.66 L5.38 6.81 L5.29 6.98 L5.23 7.18 L5.21 7.39 L5.22 7.61 L5.27 7.84 L5.36 8.06 L5.49 8.28 L5.66 8.48 L5.87 8.65 L6.11 8.80 L6.39 8.91 L6.69 8.97 L7.00 8.99 L7.32 8.95 L7.65 8.86 L7.96 8.72 L8.26 8.53 L8.53 8.28 L8.77 7.98 L8.96 7.64 L9.10 7.27 L9.18 6.87 L9.19 6.45 L9.14 6.02 L9.03 5.60 L8.84 5.19 L8.58 4.80 L8.27 4.45 L7.89 4.15 L7.46 3.91 L6.99 3.73 L6.48 3.62 L5.96 3.59 L5.43 3.65 L4.90 3.79 L4.39 4.01 L3.91 4.32 L3.48 4.70 L3.10 5.15 L2.79 5.67 L2.56 6.23 L2.42 6.84 L2.38 7.46 L2.43 8.10 L2.58 8.74 L2.83 9.35 L3.18 9.93 L3.62 10.45 L4.14 10.91 L4.73 11.29 L5.39 11.58 L6.09 11.76 L6.83 11.84 L7.57 11.80 L8.32 11.65 L9.04 11.38 L9.72 11.00 L10.34 10.51 L10.89 9.92 L11.34 9.25 L11.70 8.51 L11.93 7.71 L12.05 6.88 L12.03 6.02 L11.89 5.17 L11.61 4.34 L11.20 3.55 L10.67 2.83" fill="none" stroke="#bdbdbd" stroke-width="1.5" stroke-linecap="round"/></svg>
<div class="a" style="left:283px;top:890.4px;width:93.3px;height:14.6px;background:#1d1d1d;"></div>
<div class="t" style="left:290px;top:892.25px;font-size:12.35px;line-height:12.35px;color:#bababa;transform:scaleX(0.915);">None</div>
<svg class="a" style="left:362px;top:895.7px;" width="9" height="6" viewBox="0 0 9 6"><path d="M1 1 L4.5 4 L8 1" stroke="#a8a8a8" stroke-width="1.2" fill="none"/></svg>
<div class="a" style="left:0px;top:908.32px;width:4px;height:14.2px;background:#292929;"></div>
<div class="a" style="left:7px;top:908.32px;width:13.5px;height:14.2px;background:#292929;"></div>
<div class="a" style="left:20.5px;top:907.12px;width:18.5px;height:17.92px;background:#393939;"></div>
<div class="a" style="left:39.2px;top:908.32px;width:71.4px;height:14.6px;background:#1d1d1d;"></div>
<div class="t" style="left:47px;top:910.17px;font-size:12.35px;line-height:12.35px;color:#bababa;transform:scaleX(0.980);">Normal</div>
<svg class="a" style="left:97px;top:913.62px;" width="9" height="6" viewBox="0 0 9 6"><path d="M1 1 L4.5 4 L8 1" stroke="#a8a8a8" stroke-width="1.2" fill="none"/></svg>
<div class="a" style="left:116px;top:908.32px;width:13.3px;height:14.2px;background:#2a2a2a;"></div>
<div class="a" style="left:131px;top:907.12px;width:20px;height:17.92px;background:#383838;"></div>
<svg class="a" style="left:135px;top:908.32px;" width="14" height="14" viewBox="0 0 14 14"><path d="M5.38 8.01 L5.48 8.16 L5.61 8.29 L5.76 8.41 L5.93 8.52 L6.12 8.60 L6.32 8.66 L6.54 8.69 L6.77 8.69 L7.00 8.66 L7.23 8.59 L7.47 8.50 L7.69 8.37 L7.90 8.20 L8.09 8.01 L8.25 7.79 L8.39 7.54 L8.50 7.27 L8.58 6.98 L8.62 6.67 L8.61 6.35 L8.57 6.03 L8.48 5.71 L8.35 5.40 L8.18 5.10 L7.96 4.82 L7.71 4.57 L7.42 4.35 L7.09 4.16 L6.74 4.01 L6.36 3.90 L5.97 3.85 L5.56 3.84 L5.15 3.89 L4.75 3.99 L4.35 4.15 L3.97 4.36 L3.61 4.62 L3.28 4.93 L2.99 5.28 L2.75 5.67 L2.55 6.10 L2.41 6.56 L2.32 7.04 L2.30 7.53 L2.34 8.04 L2.44 8.53 L2.61 9.02 L2.84 9.49 L3.14 9.93 L3.49 10.34 L3.90 10.71 L4.36 11.02 L4.86 11.27 L5.40 11.47 L5.96 11.59 L6.54 11.65 L7.13 11.63 L7.72 11.53 L8.31 11.36 L8.87 11.11 L9.40 10.79 L9.90 10.40 L10.34 9.94 L10.73 9.43 L11.05 8.86 L11.31 8.25 L11.48 7.61 L11.58 6.94 L11.59 6.26 L11.51 5.58" fill="none" stroke="#bdbdbd" stroke-width="1.5" stroke-linecap="round"/><circle cx="11.6" cy="9.6" r="0.9" fill="#d0d0d0"/><circle cx="10" cy="11.8" r="0.9" fill="#d0d0d0"/><rect x="12.3" y="3.5" width="0.9" height="3.2" fill="#bdbdbd"/></svg>
<div class="a" style="left:152px;top:908.32px;width:71px;height:14.6px;background:#1d1d1d;"></div>
<div class="t" style="left:159.5px;top:910.17px;font-size:12.35px;line-height:12.35px;color:#bababa;transform:scaleX(0.938);">No Matte</div>
<svg class="a" style="left:210px;top:913.62px;" width="9" height="6" viewBox="0 0 9 6"><path d="M1 1 L4.5 4 L8 1" stroke="#a8a8a8" stroke-width="1.2" fill="none"/></svg>
<svg class="a" style="left:262px;top:908.32px;" width="14" height="14" viewBox="0 0 14 14"><path d="M5.61 6.55 L5.48 6.66 L5.38 6.81 L5.29 6.98 L5.23 7.18 L5.21 7.39 L5.22 7.61 L5.27 7.84 L5.36 8.06 L5.49 8.28 L5.66 8.48 L5.87 8.65 L6.11 8.80 L6.39 8.91 L6.69 8.97 L7.00 8.99 L7.32 8.95 L7.65 8.86 L7.96 8.72 L8.26 8.53 L8.53 8.28 L8.77 7.98 L8.96 7.64 L9.10 7.27 L9.18 6.87 L9.19 6.45 L9.14 6.02 L9.03 5.60 L8.84 5.19 L8.58 4.80 L8.27 4.45 L7.89 4.15 L7.46 3.91 L6.99 3.73 L6.48 3.62 L5.96 3.59 L5.43 3.65 L4.90 3.79 L4.39 4.01 L3.91 4.32 L3.48 4.70 L3.10 5.15 L2.79 5.67 L2.56 6.23 L2.42 6.84 L2.38 7.46 L2.43 8.10 L2.58 8.74 L2.83 9.35 L3.18 9.93 L3.62 10.45 L4.14 10.91 L4.73 11.29 L5.39 11.58 L6.09 11.76 L6.83 11.84 L7.57 11.80 L8.32 11.65 L9.04 11.38 L9.72 11.00 L10.34 10.51 L10.89 9.92 L11.34 9.25 L11.70 8.51 L11.93 7.71 L12.05 6.88 L12.03 6.02 L11.89 5.17 L11.61 4.34 L11.20 3.55 L10.67 2.83" fill="none" stroke="#bdbdbd" stroke-width="1.5" stroke-linecap="round"/></svg>
<div class="a" style="left:283px;top:908.32px;width:93.3px;height:14.6px;background:#1d1d1d;"></div>
<div class="t" style="left:290px;top:910.17px;font-size:12.35px;line-height:12.35px;color:#bababa;transform:scaleX(0.915);">None</div>
<svg class="a" style="left:362px;top:913.62px;" width="9" height="6" viewBox="0 0 9 6"><path d="M1 1 L4.5 4 L8 1" stroke="#a8a8a8" stroke-width="1.2" fill="none"/></svg>
<div class="a" style="left:0px;top:926.24px;width:4px;height:14.2px;background:#292929;"></div>
<div class="a" style="left:7px;top:926.24px;width:13.5px;height:14.2px;background:#292929;"></div>
<div class="a" style="left:20.5px;top:925.04px;width:18.5px;height:17.92px;background:#393939;"></div>
<div class="a" style="left:39.2px;top:926.24px;width:71.4px;height:14.6px;background:#1d1d1d;"></div>
<div class="t" style="left:47px;top:928.09px;font-size:12.35px;line-height:12.35px;color:#bababa;transform:scaleX(0.980);">Normal</div>
<svg class="a" style="left:97px;top:931.54px;" width="9" height="6" viewBox="0 0 9 6"><path d="M1 1 L4.5 4 L8 1" stroke="#a8a8a8" stroke-width="1.2" fill="none"/></svg>
<div class="a" style="left:116px;top:926.24px;width:13.3px;height:14.2px;background:#2a2a2a;"></div>
<div class="a" style="left:131px;top:925.04px;width:20px;height:17.92px;background:#383838;"></div>
<svg class="a" style="left:135px;top:926.24px;" width="14" height="14" viewBox="0 0 14 14"><path d="M5.38 8.01 L5.48 8.16 L5.61 8.29 L5.76 8.41 L5.93 8.52 L6.12 8.60 L6.32 8.66 L6.54 8.69 L6.77 8.69 L7.00 8.66 L7.23 8.59 L7.47 8.50 L7.69 8.37 L7.90 8.20 L8.09 8.01 L8.25 7.79 L8.39 7.54 L8.50 7.27 L8.58 6.98 L8.62 6.67 L8.61 6.35 L8.57 6.03 L8.48 5.71 L8.35 5.40 L8.18 5.10 L7.96 4.82 L7.71 4.57 L7.42 4.35 L7.09 4.16 L6.74 4.01 L6.36 3.90 L5.97 3.85 L5.56 3.84 L5.15 3.89 L4.75 3.99 L4.35 4.15 L3.97 4.36 L3.61 4.62 L3.28 4.93 L2.99 5.28 L2.75 5.67 L2.55 6.10 L2.41 6.56 L2.32 7.04 L2.30 7.53 L2.34 8.04 L2.44 8.53 L2.61 9.02 L2.84 9.49 L3.14 9.93 L3.49 10.34 L3.90 10.71 L4.36 11.02 L4.86 11.27 L5.40 11.47 L5.96 11.59 L6.54 11.65 L7.13 11.63 L7.72 11.53 L8.31 11.36 L8.87 11.11 L9.40 10.79 L9.90 10.40 L10.34 9.94 L10.73 9.43 L11.05 8.86 L11.31 8.25 L11.48 7.61 L11.58 6.94 L11.59 6.26 L11.51 5.58" fill="none" stroke="#bdbdbd" stroke-width="1.5" stroke-linecap="round"/><circle cx="11.6" cy="9.6" r="0.9" fill="#d0d0d0"/><circle cx="10" cy="11.8" r="0.9" fill="#d0d0d0"/><rect x="12.3" y="3.5" width="0.9" height="3.2" fill="#bdbdbd"/></svg>
<div class="a" style="left:152px;top:926.24px;width:71px;height:14.6px;background:#1d1d1d;"></div>
<div class="t" style="left:159.5px;top:928.09px;font-size:12.35px;line-height:12.35px;color:#bababa;transform:scaleX(0.938);">No Matte</div>
<svg class="a" style="left:210px;top:931.54px;" width="9" height="6" viewBox="0 0 9 6"><path d="M1 1 L4.5 4 L8 1" stroke="#a8a8a8" stroke-width="1.2" fill="none"/></svg>
<svg class="a" style="left:262px;top:926.24px;" width="14" height="14" viewBox="0 0 14 14"><path d="M5.61 6.55 L5.48 6.66 L5.38 6.81 L5.29 6.98 L5.23 7.18 L5.21 7.39 L5.22 7.61 L5.27 7.84 L5.36 8.06 L5.49 8.28 L5.66 8.48 L5.87 8.65 L6.11 8.80 L6.39 8.91 L6.69 8.97 L7.00 8.99 L7.32 8.95 L7.65 8.86 L7.96 8.72 L8.26 8.53 L8.53 8.28 L8.77 7.98 L8.96 7.64 L9.10 7.27 L9.18 6.87 L9.19 6.45 L9.14 6.02 L9.03 5.60 L8.84 5.19 L8.58 4.80 L8.27 4.45 L7.89 4.15 L7.46 3.91 L6.99 3.73 L6.48 3.62 L5.96 3.59 L5.43 3.65 L4.90 3.79 L4.39 4.01 L3.91 4.32 L3.48 4.70 L3.10 5.15 L2.79 5.67 L2.56 6.23 L2.42 6.84 L2.38 7.46 L2.43 8.10 L2.58 8.74 L2.83 9.35 L3.18 9.93 L3.62 10.45 L4.14 10.91 L4.73 11.29 L5.39 11.58 L6.09 11.76 L6.83 11.84 L7.57 11.80 L8.32 11.65 L9.04 11.38 L9.72 11.00 L10.34 10.51 L10.89 9.92 L11.34 9.25 L11.70 8.51 L11.93 7.71 L12.05 6.88 L12.03 6.02 L11.89 5.17 L11.61 4.34 L11.20 3.55 L10.67 2.83" fill="none" stroke="#bdbdbd" stroke-width="1.5" stroke-linecap="round"/></svg>
<div class="a" style="left:283px;top:926.24px;width:93.3px;height:14.6px;background:#1d1d1d;"></div>
<div class="t" style="left:290px;top:928.09px;font-size:12.35px;line-height:12.35px;color:#bababa;transform:scaleX(0.915);">None</div>
<svg class="a" style="left:362px;top:931.54px;" width="9" height="6" viewBox="0 0 9 6"><path d="M1 1 L4.5 4 L8 1" stroke="#a8a8a8" stroke-width="1.2" fill="none"/></svg>
<div class="a" style="left:0px;top:944.16px;width:4px;height:14.2px;background:#292929;"></div>
<div class="a" style="left:7px;top:944.16px;width:13.5px;height:14.2px;background:#292929;"></div>
<div class="a" style="left:20.5px;top:942.96px;width:18.5px;height:17.92px;background:#393939;"></div>
<div class="a" style="left:39.2px;top:944.16px;width:71.4px;height:14.6px;background:#1d1d1d;"></div>
<div class="t" style="left:47px;top:946.01px;font-size:12.35px;line-height:12.35px;color:#bababa;transform:scaleX(0.980);">Normal</div>
<svg class="a" style="left:97px;top:949.46px;" width="9" height="6" viewBox="0 0 9 6"><path d="M1 1 L4.5 4 L8 1" stroke="#a8a8a8" stroke-width="1.2" fill="none"/></svg>
<div class="a" style="left:116px;top:944.16px;width:13.3px;height:14.2px;background:#2a2a2a;"></div>
<div class="a" style="left:131px;top:942.96px;width:20px;height:17.92px;background:#383838;"></div>
<svg class="a" style="left:135px;top:944.1600000000001px;" width="14" height="14" viewBox="0 0 14 14"><path d="M5.38 8.01 L5.48 8.16 L5.61 8.29 L5.76 8.41 L5.93 8.52 L6.12 8.60 L6.32 8.66 L6.54 8.69 L6.77 8.69 L7.00 8.66 L7.23 8.59 L7.47 8.50 L7.69 8.37 L7.90 8.20 L8.09 8.01 L8.25 7.79 L8.39 7.54 L8.50 7.27 L8.58 6.98 L8.62 6.67 L8.61 6.35 L8.57 6.03 L8.48 5.71 L8.35 5.40 L8.18 5.10 L7.96 4.82 L7.71 4.57 L7.42 4.35 L7.09 4.16 L6.74 4.01 L6.36 3.90 L5.97 3.85 L5.56 3.84 L5.15 3.89 L4.75 3.99 L4.35 4.15 L3.97 4.36 L3.61 4.62 L3.28 4.93 L2.99 5.28 L2.75 5.67 L2.55 6.10 L2.41 6.56 L2.32 7.04 L2.30 7.53 L2.34 8.04 L2.44 8.53 L2.61 9.02 L2.84 9.49 L3.14 9.93 L3.49 10.34 L3.90 10.71 L4.36 11.02 L4.86 11.27 L5.40 11.47 L5.96 11.59 L6.54 11.65 L7.13 11.63 L7.72 11.53 L8.31 11.36 L8.87 11.11 L9.40 10.79 L9.90 10.40 L10.34 9.94 L10.73 9.43 L11.05 8.86 L11.31 8.25 L11.48 7.61 L11.58 6.94 L11.59 6.26 L11.51 5.58" fill="none" stroke="#bdbdbd" stroke-width="1.5" stroke-linecap="round"/><circle cx="11.6" cy="9.6" r="0.9" fill="#d0d0d0"/><circle cx="10" cy="11.8" r="0.9" fill="#d0d0d0"/><rect x="12.3" y="3.5" width="0.9" height="3.2" fill="#bdbdbd"/></svg>
<div class="a" style="left:152px;top:944.16px;width:71px;height:14.6px;background:#1d1d1d;"></div>
<div class="t" style="left:159.5px;top:946.01px;font-size:12.35px;line-height:12.35px;color:#bababa;transform:scaleX(0.938);">No Matte</div>
<svg class="a" style="left:210px;top:949.46px;" width="9" height="6" viewBox="0 0 9 6"><path d="M1 1 L4.5 4 L8 1" stroke="#a8a8a8" stroke-width="1.2" fill="none"/></svg>
<svg class="a" style="left:262px;top:944.1600000000001px;" width="14" height="14" viewBox="0 0 14 14"><path d="M5.61 6.55 L5.48 6.66 L5.38 6.81 L5.29 6.98 L5.23 7.18 L5.21 7.39 L5.22 7.61 L5.27 7.84 L5.36 8.06 L5.49 8.28 L5.66 8.48 L5.87 8.65 L6.11 8.80 L6.39 8.91 L6.69 8.97 L7.00 8.99 L7.32 8.95 L7.65 8.86 L7.96 8.72 L8.26 8.53 L8.53 8.28 L8.77 7.98 L8.96 7.64 L9.10 7.27 L9.18 6.87 L9.19 6.45 L9.14 6.02 L9.03 5.60 L8.84 5.19 L8.58 4.80 L8.27 4.45 L7.89 4.15 L7.46 3.91 L6.99 3.73 L6.48 3.62 L5.96 3.59 L5.43 3.65 L4.90 3.79 L4.39 4.01 L3.91 4.32 L3.48 4.70 L3.10 5.15 L2.79 5.67 L2.56 6.23 L2.42 6.84 L2.38 7.46 L2.43 8.10 L2.58 8.74 L2.83 9.35 L3.18 9.93 L3.62 10.45 L4.14 10.91 L4.73 11.29 L5.39 11.58 L6.09 11.76 L6.83 11.84 L7.57 11.80 L8.32 11.65 L9.04 11.38 L9.72 11.00 L10.34 10.51 L10.89 9.92 L11.34 9.25 L11.70 8.51 L11.93 7.71 L12.05 6.88 L12.03 6.02 L11.89 5.17 L11.61 4.34 L11.20 3.55 L10.67 2.83" fill="none" stroke="#bdbdbd" stroke-width="1.5" stroke-linecap="round"/></svg>
<div class="a" style="left:283px;top:944.16px;width:93.3px;height:14.6px;background:#1d1d1d;"></div>
<div class="t" style="left:290px;top:946.01px;font-size:12.35px;line-height:12.35px;color:#bababa;transform:scaleX(0.915);">None</div>
<svg class="a" style="left:362px;top:949.46px;" width="9" height="6" viewBox="0 0 9 6"><path d="M1 1 L4.5 4 L8 1" stroke="#a8a8a8" stroke-width="1.2" fill="none"/></svg>
<div class="a" style="left:0px;top:962.08px;width:4px;height:14.2px;background:#292929;"></div>
<div class="a" style="left:7px;top:962.08px;width:13.5px;height:14.2px;background:#292929;"></div>
<div class="a" style="left:20.5px;top:960.88px;width:18.5px;height:17.92px;background:#393939;"></div>
<div class="a" style="left:39.2px;top:962.08px;width:71.4px;height:14.6px;background:#1d1d1d;"></div>
<div class="t" style="left:47px;top:963.93px;font-size:12.35px;line-height:12.35px;color:#bababa;transform:scaleX(0.980);">Normal</div>
<svg class="a" style="left:97px;top:967.38px;" width="9" height="6" viewBox="0 0 9 6"><path d="M1 1 L4.5 4 L8 1" stroke="#a8a8a8" stroke-width="1.2" fill="none"/></svg>
<div class="a" style="left:116px;top:962.08px;width:13.3px;height:14.2px;background:#2a2a2a;"></div>
<div class="a" style="left:131px;top:960.88px;width:20px;height:17.92px;background:#383838;"></div>
<svg class="a" style="left:135px;top:962.08px;" width="14" height="14" viewBox="0 0 14 14"><path d="M5.38 8.01 L5.48 8.16 L5.61 8.29 L5.76 8.41 L5.93 8.52 L6.12 8.60 L6.32 8.66 L6.54 8.69 L6.77 8.69 L7.00 8.66 L7.23 8.59 L7.47 8.50 L7.69 8.37 L7.90 8.20 L8.09 8.01 L8.25 7.79 L8.39 7.54 L8.50 7.27 L8.58 6.98 L8.62 6.67 L8.61 6.35 L8.57 6.03 L8.48 5.71 L8.35 5.40 L8.18 5.10 L7.96 4.82 L7.71 4.57 L7.42 4.35 L7.09 4.16 L6.74 4.01 L6.36 3.90 L5.97 3.85 L5.56 3.84 L5.15 3.89 L4.75 3.99 L4.35 4.15 L3.97 4.36 L3.61 4.62 L3.28 4.93 L2.99 5.28 L2.75 5.67 L2.55 6.10 L2.41 6.56 L2.32 7.04 L2.30 7.53 L2.34 8.04 L2.44 8.53 L2.61 9.02 L2.84 9.49 L3.14 9.93 L3.49 10.34 L3.90 10.71 L4.36 11.02 L4.86 11.27 L5.40 11.47 L5.96 11.59 L6.54 11.65 L7.13 11.63 L7.72 11.53 L8.31 11.36 L8.87 11.11 L9.40 10.79 L9.90 10.40 L10.34 9.94 L10.73 9.43 L11.05 8.86 L11.31 8.25 L11.48 7.61 L11.58 6.94 L11.59 6.26 L11.51 5.58" fill="none" stroke="#bdbdbd" stroke-width="1.5" stroke-linecap="round"/><circle cx="11.6" cy="9.6" r="0.9" fill="#d0d0d0"/><circle cx="10" cy="11.8" r="0.9" fill="#d0d0d0"/><rect x="12.3" y="3.5" width="0.9" height="3.2" fill="#bdbdbd"/></svg>
<div class="a" style="left:152px;top:962.08px;width:71px;height:14.6px;background:#1d1d1d;"></div>
<div class="t" style="left:159.5px;top:963.93px;font-size:12.35px;line-height:12.35px;color:#bababa;transform:scaleX(0.938);">No Matte</div>
<svg class="a" style="left:210px;top:967.38px;" width="9" height="6" viewBox="0 0 9 6"><path d="M1 1 L4.5 4 L8 1" stroke="#a8a8a8" stroke-width="1.2" fill="none"/></svg>
<svg class="a" style="left:262px;top:962.08px;" width="14" height="14" viewBox="0 0 14 14"><path d="M5.61 6.55 L5.48 6.66 L5.38 6.81 L5.29 6.98 L5.23 7.18 L5.21 7.39 L5.22 7.61 L5.27 7.84 L5.36 8.06 L5.49 8.28 L5.66 8.48 L5.87 8.65 L6.11 8.80 L6.39 8.91 L6.69 8.97 L7.00 8.99 L7.32 8.95 L7.65 8.86 L7.96 8.72 L8.26 8.53 L8.53 8.28 L8.77 7.98 L8.96 7.64 L9.10 7.27 L9.18 6.87 L9.19 6.45 L9.14 6.02 L9.03 5.60 L8.84 5.19 L8.58 4.80 L8.27 4.45 L7.89 4.15 L7.46 3.91 L6.99 3.73 L6.48 3.62 L5.96 3.59 L5.43 3.65 L4.90 3.79 L4.39 4.01 L3.91 4.32 L3.48 4.70 L3.10 5.15 L2.79 5.67 L2.56 6.23 L2.42 6.84 L2.38 7.46 L2.43 8.10 L2.58 8.74 L2.83 9.35 L3.18 9.93 L3.62 10.45 L4.14 10.91 L4.73 11.29 L5.39 11.58 L6.09 11.76 L6.83 11.84 L7.57 11.80 L8.32 11.65 L9.04 11.38 L9.72 11.00 L10.34 10.51 L10.89 9.92 L11.34 9.25 L11.70 8.51 L11.93 7.71 L12.05 6.88 L12.03 6.02 L11.89 5.17 L11.61 4.34 L11.20 3.55 L10.67 2.83" fill="none" stroke="#bdbdbd" stroke-width="1.5" stroke-linecap="round"/></svg>
<div class="a" style="left:283px;top:962.08px;width:93.3px;height:14.6px;background:#1d1d1d;"></div>
<div class="t" style="left:290px;top:963.93px;font-size:12.35px;line-height:12.35px;color:#bababa;transform:scaleX(0.915);">None</div>
<svg class="a" style="left:362px;top:967.38px;" width="9" height="6" viewBox="0 0 9 6"><path d="M1 1 L4.5 4 L8 1" stroke="#a8a8a8" stroke-width="1.2" fill="none"/></svg>
<div class="a" style="left:0px;top:980.0px;width:4px;height:14.2px;background:#292929;"></div>
<div class="a" style="left:7px;top:980.0px;width:13.5px;height:14.2px;background:#292929;"></div>
<div class="a" style="left:20.5px;top:978.8px;width:18.5px;height:17.92px;background:#393939;"></div>
<div class="a" style="left:39.2px;top:980.0px;width:71.4px;height:14.6px;background:#1d1d1d;"></div>
<div class="t" style="left:47px;top:981.85px;font-size:12.35px;line-height:12.35px;color:#bababa;transform:scaleX(0.980);">Normal</div>
<svg class="a" style="left:97px;top:985.3px;" width="9" height="6" viewBox="0 0 9 6"><path d="M1 1 L4.5 4 L8 1" stroke="#a8a8a8" stroke-width="1.2" fill="none"/></svg>
<div class="a" style="left:116px;top:980.0px;width:13.3px;height:14.2px;background:#2a2a2a;"></div>
<div class="a" style="left:131px;top:978.8px;width:20px;height:17.92px;background:#383838;"></div>
<svg class="a" style="left:135px;top:980.0px;" width="14" height="14" viewBox="0 0 14 14"><path d="M5.38 8.01 L5.48 8.16 L5.61 8.29 L5.76 8.41 L5.93 8.52 L6.12 8.60 L6.32 8.66 L6.54 8.69 L6.77 8.69 L7.00 8.66 L7.23 8.59 L7.47 8.50 L7.69 8.37 L7.90 8.20 L8.09 8.01 L8.25 7.79 L8.39 7.54 L8.50 7.27 L8.58 6.98 L8.62 6.67 L8.61 6.35 L8.57 6.03 L8.48 5.71 L8.35 5.40 L8.18 5.10 L7.96 4.82 L7.71 4.57 L7.42 4.35 L7.09 4.16 L6.74 4.01 L6.36 3.90 L5.97 3.85 L5.56 3.84 L5.15 3.89 L4.75 3.99 L4.35 4.15 L3.97 4.36 L3.61 4.62 L3.28 4.93 L2.99 5.28 L2.75 5.67 L2.55 6.10 L2.41 6.56 L2.32 7.04 L2.30 7.53 L2.34 8.04 L2.44 8.53 L2.61 9.02 L2.84 9.49 L3.14 9.93 L3.49 10.34 L3.90 10.71 L4.36 11.02 L4.86 11.27 L5.40 11.47 L5.96 11.59 L6.54 11.65 L7.13 11.63 L7.72 11.53 L8.31 11.36 L8.87 11.11 L9.40 10.79 L9.90 10.40 L10.34 9.94 L10.73 9.43 L11.05 8.86 L11.31 8.25 L11.48 7.61 L11.58 6.94 L11.59 6.26 L11.51 5.58" fill="none" stroke="#bdbdbd" stroke-width="1.5" stroke-linecap="round"/><circle cx="11.6" cy="9.6" r="0.9" fill="#d0d0d0"/><circle cx="10" cy="11.8" r="0.9" fill="#d0d0d0"/><rect x="12.3" y="3.5" width="0.9" height="3.2" fill="#bdbdbd"/></svg>
<div class="a" style="left:152px;top:980.0px;width:71px;height:14.6px;background:#1d1d1d;"></div>
<div class="t" style="left:159.5px;top:981.85px;font-size:12.35px;line-height:12.35px;color:#bababa;transform:scaleX(0.938);">No Matte</div>
<svg class="a" style="left:210px;top:985.3px;" width="9" height="6" viewBox="0 0 9 6"><path d="M1 1 L4.5 4 L8 1" stroke="#a8a8a8" stroke-width="1.2" fill="none"/></svg>
<svg class="a" style="left:262px;top:980.0px;" width="14" height="14" viewBox="0 0 14 14"><path d="M5.61 6.55 L5.48 6.66 L5.38 6.81 L5.29 6.98 L5.23 7.18 L5.21 7.39 L5.22 7.61 L5.27 7.84 L5.36 8.06 L5.49 8.28 L5.66 8.48 L5.87 8.65 L6.11 8.80 L6.39 8.91 L6.69 8.97 L7.00 8.99 L7.32 8.95 L7.65 8.86 L7.96 8.72 L8.26 8.53 L8.53 8.28 L8.77 7.98 L8.96 7.64 L9.10 7.27 L9.18 6.87 L9.19 6.45 L9.14 6.02 L9.03 5.60 L8.84 5.19 L8.58 4.80 L8.27 4.45 L7.89 4.15 L7.46 3.91 L6.99 3.73 L6.48 3.62 L5.96 3.59 L5.43 3.65 L4.90 3.79 L4.39 4.01 L3.91 4.32 L3.48 4.70 L3.10 5.15 L2.79 5.67 L2.56 6.23 L2.42 6.84 L2.38 7.46 L2.43 8.10 L2.58 8.74 L2.83 9.35 L3.18 9.93 L3.62 10.45 L4.14 10.91 L4.73 11.29 L5.39 11.58 L6.09 11.76 L6.83 11.84 L7.57 11.80 L8.32 11.65 L9.04 11.38 L9.72 11.00 L10.34 10.51 L10.89 9.92 L11.34 9.25 L11.70 8.51 L11.93 7.71 L12.05 6.88 L12.03 6.02 L11.89 5.17 L11.61 4.34 L11.20 3.55 L10.67 2.83" fill="none" stroke="#bdbdbd" stroke-width="1.5" stroke-linecap="round"/></svg>
<div class="a" style="left:283px;top:980.0px;width:93.3px;height:14.6px;background:#1d1d1d;"></div>
<div class="t" style="left:290px;top:981.85px;font-size:12.35px;line-height:12.35px;color:#bababa;transform:scaleX(0.915);">None</div>
<svg class="a" style="left:362px;top:985.3px;" width="9" height="6" viewBox="0 0 9 6"><path d="M1 1 L4.5 4 L8 1" stroke="#a8a8a8" stroke-width="1.2" fill="none"/></svg>
<div class="a" style="left:0px;top:997.92px;width:4px;height:14.2px;background:#292929;"></div>
<div class="a" style="left:7px;top:997.92px;width:13.5px;height:14.2px;background:#292929;"></div>
<div class="a" style="left:20.5px;top:996.72px;width:18.5px;height:17.92px;background:#393939;"></div>
<div class="a" style="left:39.2px;top:997.92px;width:71.4px;height:14.6px;background:#1d1d1d;"></div>
<div class="t" style="left:47px;top:999.77px;font-size:12.35px;line-height:12.35px;color:#bababa;transform:scaleX(0.980);">Normal</div>
<svg class="a" style="left:97px;top:1003.22px;" width="9" height="6" viewBox="0 0 9 6"><path d="M1 1 L4.5 4 L8 1" stroke="#a8a8a8" stroke-width="1.2" fill="none"/></svg>
<div class="a" style="left:116px;top:997.92px;width:13.3px;height:14.2px;background:#2a2a2a;"></div>
<div class="a" style="left:131px;top:996.72px;width:20px;height:17.92px;background:#383838;"></div>
<svg class="a" style="left:135px;top:997.9200000000001px;" width="14" height="14" viewBox="0 0 14 14"><path d="M5.38 8.01 L5.48 8.16 L5.61 8.29 L5.76 8.41 L5.93 8.52 L6.12 8.60 L6.32 8.66 L6.54 8.69 L6.77 8.69 L7.00 8.66 L7.23 8.59 L7.47 8.50 L7.69 8.37 L7.90 8.20 L8.09 8.01 L8.25 7.79 L8.39 7.54 L8.50 7.27 L8.58 6.98 L8.62 6.67 L8.61 6.35 L8.57 6.03 L8.48 5.71 L8.35 5.40 L8.18 5.10 L7.96 4.82 L7.71 4.57 L7.42 4.35 L7.09 4.16 L6.74 4.01 L6.36 3.90 L5.97 3.85 L5.56 3.84 L5.15 3.89 L4.75 3.99 L4.35 4.15 L3.97 4.36 L3.61 4.62 L3.28 4.93 L2.99 5.28 L2.75 5.67 L2.55 6.10 L2.41 6.56 L2.32 7.04 L2.30 7.53 L2.34 8.04 L2.44 8.53 L2.61 9.02 L2.84 9.49 L3.14 9.93 L3.49 10.34 L3.90 10.71 L4.36 11.02 L4.86 11.27 L5.40 11.47 L5.96 11.59 L6.54 11.65 L7.13 11.63 L7.72 11.53 L8.31 11.36 L8.87 11.11 L9.40 10.79 L9.90 10.40 L10.34 9.94 L10.73 9.43 L11.05 8.86 L11.31 8.25 L11.48 7.61 L11.58 6.94 L11.59 6.26 L11.51 5.58" fill="none" stroke="#bdbdbd" stroke-width="1.5" stroke-linecap="round"/><circle cx="11.6" cy="9.6" r="0.9" fill="#d0d0d0"/><circle cx="10" cy="11.8" r="0.9" fill="#d0d0d0"/><rect x="12.3" y="3.5" width="0.9" height="3.2" fill="#bdbdbd"/></svg>
<div class="a" style="left:152px;top:997.92px;width:71px;height:14.6px;background:#1d1d1d;"></div>
<div class="t" style="left:159.5px;top:999.77px;font-size:12.35px;line-height:12.35px;color:#bababa;transform:scaleX(0.938);">No Matte</div>
<svg class="a" style="left:210px;top:1003.22px;" width="9" height="6" viewBox="0 0 9 6"><path d="M1 1 L4.5 4 L8 1" stroke="#a8a8a8" stroke-width="1.2" fill="none"/></svg>
<svg class="a" style="left:262px;top:997.9200000000001px;" width="14" height="14" viewBox="0 0 14 14"><path d="M5.61 6.55 L5.48 6.66 L5.38 6.81 L5.29 6.98 L5.23 7.18 L5.21 7.39 L5.22 7.61 L5.27 7.84 L5.36 8.06 L5.49 8.28 L5.66 8.48 L5.87 8.65 L6.11 8.80 L6.39 8.91 L6.69 8.97 L7.00 8.99 L7.32 8.95 L7.65 8.86 L7.96 8.72 L8.26 8.53 L8.53 8.28 L8.77 7.98 L8.96 7.64 L9.10 7.27 L9.18 6.87 L9.19 6.45 L9.14 6.02 L9.03 5.60 L8.84 5.19 L8.58 4.80 L8.27 4.45 L7.89 4.15 L7.46 3.91 L6.99 3.73 L6.48 3.62 L5.96 3.59 L5.43 3.65 L4.90 3.79 L4.39 4.01 L3.91 4.32 L3.48 4.70 L3.10 5.15 L2.79 5.67 L2.56 6.23 L2.42 6.84 L2.38 7.46 L2.43 8.10 L2.58 8.74 L2.83 9.35 L3.18 9.93 L3.62 10.45 L4.14 10.91 L4.73 11.29 L5.39 11.58 L6.09 11.76 L6.83 11.84 L7.57 11.80 L8.32 11.65 L9.04 11.38 L9.72 11.00 L10.34 10.51 L10.89 9.92 L11.34 9.25 L11.70 8.51 L11.93 7.71 L12.05 6.88 L12.03 6.02 L11.89 5.17 L11.61 4.34 L11.20 3.55 L10.67 2.83" fill="none" stroke="#bdbdbd" stroke-width="1.5" stroke-linecap="round"/></svg>
<div class="a" style="left:283px;top:997.92px;width:93.3px;height:14.6px;background:#1d1d1d;"></div>
<div class="t" style="left:290px;top:999.77px;font-size:12.35px;line-height:12.35px;color:#bababa;transform:scaleX(0.915);">None</div>
<svg class="a" style="left:362px;top:1003.22px;" width="9" height="6" viewBox="0 0 9 6"><path d="M1 1 L4.5 4 L8 1" stroke="#a8a8a8" stroke-width="1.2" fill="none"/></svg>
<div class="a" style="left:0px;top:621.6px;width:21px;height:14.2px;background:#292929;"></div>
<svg class="a" style="left:0px;top:622px;" width="6" height="14" viewBox="0 0 6 14"><circle cx="-0.5" cy="6.8" r="4.2" fill="#c8c8c8"/></svg>
<div class="a" style="left:399px;top:568px;width:625px;height:10px;background:#262626;"></div>
<div class="a" style="left:404px;top:569px;width:620px;height:9px;background:#6d6d6d;"></div>
<svg class="a" style="left:399px;top:568px;" width="7" height="10" viewBox="0 0 7 10"><path d="M6 0.5 L3 0.5 Q0.5 0.5 0.5 5 Q0.5 9.5 3 9.5 L6 9.5Z" fill="#3a90e8"/></svg>
<div class="a" style="left:399px;top:578px;width:625px;height:22px;background:#252525;"></div>
<div class="a" style="left:405.3px;top:586px;width:1px;height:12px;background:#8a8a8a;"></div>
<div class="t" style="left:444.0px;top:582.28px;font-size:10.43px;line-height:10.43px;color:#a8a8a8;transform:scaleX(0.983);">01:01f</div>
<div class="a" style="left:458.5px;top:594px;width:1px;height:4px;background:#8a8a8a;"></div>
<div class="t" style="left:497.20000000000005px;top:582.28px;font-size:10.43px;line-height:10.43px;color:#a8a8a8;transform:scaleX(0.983);">02:02f</div>
<div class="a" style="left:511.7px;top:594px;width:1px;height:4px;background:#8a8a8a;"></div>
<div class="t" style="left:550.4000000000001px;top:582.28px;font-size:10.43px;line-height:10.43px;color:#a8a8a8;transform:scaleX(0.983);">03:03f</div>
<div class="a" style="left:564.9px;top:594px;width:1px;height:4px;background:#8a8a8a;"></div>
<div class="t" style="left:603.6px;top:582.28px;font-size:10.43px;line-height:10.43px;color:#a8a8a8;transform:scaleX(0.983);">05:00f</div>
<div class="a" style="left:618.1px;top:586px;width:1px;height:12px;background:#8a8a8a;"></div>
<div class="t" style="left:656.8px;top:582.28px;font-size:10.43px;line-height:10.43px;color:#a8a8a8;transform:scaleX(0.983);">06:01f</div>
<div class="a" style="left:671.3px;top:594px;width:1px;height:4px;background:#8a8a8a;"></div>
<div class="t" style="left:710.0px;top:582.28px;font-size:10.43px;line-height:10.43px;color:#a8a8a8;transform:scaleX(0.983);">07:02f</div>
<div class="a" style="left:724.5px;top:594px;width:1px;height:4px;background:#8a8a8a;"></div>
<div class="t" style="left:763.2px;top:582.28px;font-size:10.43px;line-height:10.43px;color:#a8a8a8;transform:scaleX(0.983);">08:03f</div>
<div class="a" style="left:777.7px;top:594px;width:1px;height:4px;background:#8a8a8a;"></div>
<div class="t" style="left:816.4000000000001px;top:582.28px;font-size:10.43px;line-height:10.43px;color:#a8a8a8;transform:scaleX(0.983);">10:00f</div>
<div class="a" style="left:830.9px;top:586px;width:1px;height:12px;background:#8a8a8a;"></div>
<div class="t" style="left:869.6px;top:582.28px;font-size:10.43px;line-height:10.43px;color:#a8a8a8;transform:scaleX(1.010);">11:01f</div>
<div class="a" style="left:884.1px;top:594px;width:1px;height:4px;background:#8a8a8a;"></div>
<div class="t" style="left:922.8px;top:582.28px;font-size:10.43px;line-height:10.43px;color:#a8a8a8;transform:scaleX(0.983);">12:02f</div>
<div class="a" style="left:937.3px;top:594px;width:1px;height:4px;background:#8a8a8a;"></div>
<div class="t" style="left:976.0px;top:582.28px;font-size:10.43px;line-height:10.43px;color:#a8a8a8;transform:scaleX(0.983);">13:03f</div>
<div class="a" style="left:990.5px;top:594px;width:1px;height:4px;background:#8a8a8a;"></div>
<div class="a" style="left:399px;top:578px;width:6px;height:22px;background:#252525;"></div>
<div class="t" style="left:398.5px;top:582.28px;font-size:10.43px;line-height:10.43px;color:#a8a8a8;transform:scaleX(1.208);">:00f</div>
<div class="a" style="left:405px;top:600px;width:619px;height:16px;background:#6b6b6b;"></div>
<svg class="a" style="left:399px;top:599px;" width="7" height="18" viewBox="0 0 7 18"><path d="M6 0.5 L3 0.5 Q0.5 0.5 0.5 9 Q0.5 17.5 3 17.5 L6 17.5Z" fill="#3a90e8"/></svg>
<div class="a" style="left:405px;top:616px;width:619px;height:1px;background:#2a2a2a;"></div>
<div class="a" style="left:405px;top:617px;width:619px;height:3.5px;background:#1c9a2a;"></div>
<div class="a" style="left:808.6px;top:617px;width:11.399999999999977px;height:3.5px;background:#0c22b8;"></div>
<div class="a" style="left:873px;top:617px;width:11px;height:3.5px;background:#0c22b8;"></div>
<div class="a" style="left:915px;top:617px;width:22px;height:3.5px;background:#0c22b8;"></div>
<div class="a" style="left:959px;top:617px;width:10px;height:3.5px;background:#0c22b8;"></div>
<div class="a" style="left:1002px;top:617px;width:22px;height:3.5px;background:#0c22b8;"></div>
<div class="a" style="left:405px;top:620.5px;width:619px;height:385.5px;background:#353535;"></div>
<div class="a" style="left:405px;top:620.5px;width:619px;height:16.5px;background:#8b8b98;"></div>
<div class="a" style="left:405px;top:620.5px;width:12px;height:16.5px;background:#9a9aa4;"></div>
<div class="a" style="left:405px;top:639.62px;width:619px;height:16.32px;background:#454545;"></div>
<div class="a" style="left:405px;top:639.62px;width:11.5px;height:16.32px;background:#555555;"></div>
<div class="a" style="left:405.0px;top:639.62px;width:10.67px;height:16.32px;background:#8d8d97;"></div>
<div class="a" style="left:405px;top:657.54px;width:619px;height:16.32px;background:#454545;"></div>
<div class="a" style="left:405px;top:657.54px;width:11.5px;height:16.32px;background:#555555;"></div>
<div class="a" style="left:415.67px;top:657.54px;width:10.67px;height:16.32px;background:#8d8d97;"></div>
<div class="a" style="left:405px;top:675.46px;width:619px;height:16.32px;background:#454545;"></div>
<div class="a" style="left:405px;top:675.46px;width:11.5px;height:16.32px;background:#555555;"></div>
<div class="a" style="left:426.34px;top:675.46px;width:10.67px;height:16.32px;background:#8d8d97;"></div>
<div class="a" style="left:405px;top:693.38px;width:619px;height:16.32px;background:#454545;"></div>
<div class="a" style="left:405px;top:693.38px;width:11.5px;height:16.32px;background:#555555;"></div>
<div class="a" style="left:437.01px;top:693.38px;width:10.67px;height:16.32px;background:#8d8d97;"></div>
<div class="a" style="left:405px;top:711.3px;width:619px;height:16.32px;background:#454545;"></div>
<div class="a" style="left:405px;top:711.3px;width:11.5px;height:16.32px;background:#555555;"></div>
<div class="a" style="left:447.68px;top:711.3px;width:10.67px;height:16.32px;background:#8d8d97;"></div>
<div class="a" style="left:405px;top:729.22px;width:619px;height:16.32px;background:#454545;"></div>
<div class="a" style="left:405px;top:729.22px;width:11.5px;height:16.32px;background:#555555;"></div>
<div class="a" style="left:458.35px;top:729.22px;width:10.67px;height:16.32px;background:#8d8d97;"></div>
<div class="a" style="left:405px;top:747.14px;width:619px;height:16.32px;background:#454545;"></div>
<div class="a" style="left:405px;top:747.14px;width:11.5px;height:16.32px;background:#555555;"></div>
<div class="a" style="left:469.02px;top:747.14px;width:10.67px;height:16.32px;background:#8d8d97;"></div>
<div class="a" style="left:405px;top:765.06px;width:619px;height:16.32px;background:#454545;"></div>
<div class="a" style="left:405px;top:765.06px;width:11.5px;height:16.32px;background:#555555;"></div>
<div class="a" style="left:479.69px;top:765.06px;width:10.67px;height:16.32px;background:#8d8d97;"></div>
<div class="a" style="left:405px;top:782.98px;width:619px;height:16.32px;background:#454545;"></div>
<div class="a" style="left:405px;top:782.98px;width:11.5px;height:16.32px;background:#555555;"></div>
<div class="a" style="left:490.36px;top:782.98px;width:10.67px;height:16.32px;background:#8d8d97;"></div>
<div class="a" style="left:405px;top:800.9px;width:619px;height:16.32px;background:#454545;"></div>
<div class="a" style="left:405px;top:800.9px;width:11.5px;height:16.32px;background:#555555;"></div>
<div class="a" style="left:501.03px;top:800.9px;width:10.67px;height:16.32px;background:#8d8d97;"></div>
<div class="a" style="left:405px;top:818.82px;width:619px;height:16.32px;background:#454545;"></div>
<div class="a" style="left:405px;top:818.82px;width:11.5px;height:16.32px;background:#555555;"></div>
<div class="a" style="left:511.7px;top:818.82px;width:10.67px;height:16.32px;background:#8d8d97;"></div>
<div class="a" style="left:405px;top:836.74px;width:619px;height:16.32px;background:#454545;"></div>
<div class="a" style="left:405px;top:836.74px;width:11.5px;height:16.32px;background:#555555;"></div>
<div class="a" style="left:522.37px;top:836.74px;width:10.67px;height:16.32px;background:#8d8d97;"></div>
<div class="a" style="left:405px;top:854.66px;width:619px;height:16.32px;background:#454545;"></div>
<div class="a" style="left:405px;top:854.66px;width:11.5px;height:16.32px;background:#555555;"></div>
<div class="a" style="left:533.04px;top:854.66px;width:10.67px;height:16.32px;background:#8d8d97;"></div>
<div class="a" style="left:405px;top:872.58px;width:619px;height:16.32px;background:#454545;"></div>
<div class="a" style="left:405px;top:872.58px;width:11.5px;height:16.32px;background:#555555;"></div>
<div class="a" style="left:543.71px;top:872.58px;width:10.67px;height:16.32px;background:#8d8d97;"></div>
<div class="a" style="left:405px;top:890.5px;width:619px;height:16.32px;background:#454545;"></div>
<div class="a" style="left:405px;top:890.5px;width:11.5px;height:16.32px;background:#555555;"></div>
<div class="a" style="left:554.38px;top:890.5px;width:10.67px;height:16.32px;background:#8d8d97;"></div>
<div class="a" style="left:405px;top:908.42px;width:619px;height:16.32px;background:#454545;"></div>
<div class="a" style="left:405px;top:908.42px;width:11.5px;height:16.32px;background:#555555;"></div>
<div class="a" style="left:565.05px;top:908.42px;width:10.67px;height:16.32px;background:#8d8d97;"></div>
<div class="a" style="left:405px;top:926.34px;width:619px;height:16.32px;background:#454545;"></div>
<div class="a" style="left:405px;top:926.34px;width:11.5px;height:16.32px;background:#555555;"></div>
<div class="a" style="left:575.72px;top:926.34px;width:10.67px;height:16.32px;background:#8d8d97;"></div>
<div class="a" style="left:405px;top:944.26px;width:619px;height:16.32px;background:#454545;"></div>
<div class="a" style="left:405px;top:944.26px;width:11.5px;height:16.32px;background:#555555;"></div>
<div class="a" style="left:586.39px;top:944.26px;width:10.67px;height:16.32px;background:#8d8d97;"></div>
<div class="a" style="left:405px;top:962.18px;width:619px;height:16.32px;background:#454545;"></div>
<div class="a" style="left:405px;top:962.18px;width:11.5px;height:16.32px;background:#555555;"></div>
<div class="a" style="left:597.06px;top:962.18px;width:10.67px;height:16.32px;background:#8d8d97;"></div>
<div class="a" style="left:405px;top:980.1px;width:619px;height:16.32px;background:#454545;"></div>
<div class="a" style="left:405px;top:980.1px;width:11.5px;height:16.32px;background:#555555;"></div>
<div class="a" style="left:607.73px;top:980.1px;width:10.67px;height:16.32px;background:#8d8d97;"></div>
<div class="a" style="left:405px;top:998.02px;width:619px;height:16.32px;background:#454545;"></div>
<div class="a" style="left:405px;top:998.02px;width:11.5px;height:16.32px;background:#555555;"></div>
<div class="a" style="left:618.4px;top:998.02px;width:10.67px;height:16.32px;background:#8d8d97;"></div>
<div class="a" style="left:427px;top:598px;width:2px;height:408px;background:#2d7fd8;"></div>
<svg class="a" style="left:420px;top:583px;" width="16" height="17" viewBox="0 0 16 17"><path d="M1 1 L15 1 L15 9 L8 16 L1 9Z" fill="#3a90e8"/><path d="M8 6 L8 16" stroke="#1a5aa0" stroke-width="1"/></svg>
<svg class="a" style="left:432px;top:597px;" width="14" height="22" viewBox="0 0 14 22"><path d="M1.5 1.5 L1.5 16 L5 12.5 L8 19 L10.5 18 L7.5 11.5 L12 11.5Z" fill="#f4f4f4" stroke="#555" stroke-width="0.8"/></svg>
<div class="a" style="left:0px;top:1006px;width:1024px;height:18px;background:#222222;"></div>
<svg class="a" style="left:402px;top:1010px;" width="14" height="8" viewBox="0 0 14 8"><path d="M1 7 L5 3 L7 4.5 L9 2 L13 7Z" fill="#c8c8c8"/></svg>
<svg class="a" style="left:424px;top:1010px;" width="56" height="14" viewBox="0 0 56 14"><circle cx="7.5" cy="6.5" r="4.8" fill="none" stroke="#b8b8b8" stroke-width="2"/><rect x="13" y="6" width="40" height="1.4" fill="#4a4a4a"/></svg>
<svg class="a" style="left:488px;top:1008px;" width="20" height="12" viewBox="0 0 20 12"><path d="M1 11 L7 4 L9 7 L13 1 L19 11Z" fill="#c8c8c8"/></svg>
</body></html>
